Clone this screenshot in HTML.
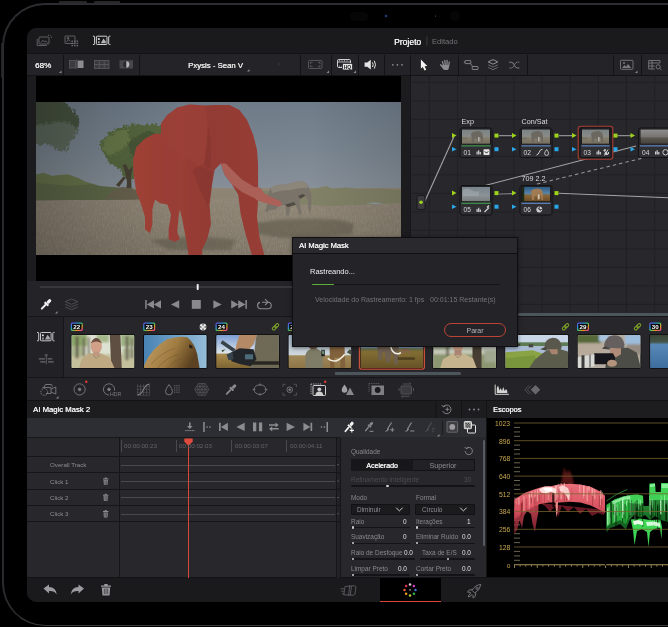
<!DOCTYPE html>
<html><head><meta charset="utf-8">
<style>
*{margin:0;padding:0;box-sizing:border-box}
html,body{width:668px;height:627px;background:#000;overflow:hidden}
body{font-family:"Liberation Sans",sans-serif;color:#ddd;position:relative}
.a{position:absolute}
#frame{left:2.4px;top:2.5px;width:720px;height:623px;border-style:solid;border-color:#2d2d31 #2a2a2e #38383a #2a2a2e;border-width:2.6px 2.8px 1.6px 2.8px;border-radius:43px;background:#000}
#screen{left:27px;top:28px;width:700px;height:573.5px;border-radius:10px;background:#242428;overflow:hidden}
#s{position:absolute;left:-27px;top:-28px;width:668px;height:627px;will-change:transform}
#s>div,#s>svg{position:absolute}
.t{position:absolute;white-space:nowrap;line-height:12px;height:12px;font-size:9px;will-change:transform}
.b{font-weight:bold;color:#f2f2f2}
.vs{position:absolute;width:1px;background:#151517}
svg text{font-family:"Liberation Sans",sans-serif}
</style></head><body>
<div class="a" style="left:1px;top:43px;width:2px;height:34.5px;background:#232325;border-radius:1px 0 0 1px"></div><div class="a" style="left:59.400px;top:1px;width:27.600px;height:2px;background:#262628;border-radius:1px 1px 0 0"></div><div class="a" style="left:93.900px;top:1px;width:26.600px;height:2px;background:#262628;border-radius:1px 1px 0 0"></div>
<div id="frame" class="a"></div>
<div class="a" style="left:350px;top:12.400px;width:18px;height:8.300px;border-radius:4.200px;background:#060607"></div><div class="a" style="left:384.700px;top:14.700px;width:2px;height:2.400px;border-radius:1px;background:#2a4aa0;box-shadow:0 0 1.500px #1c306c"></div><div class="a" style="left:435px;top:15.400px;width:1.300px;height:1.300px;border-radius:1px;background:#333"></div><div class="a" style="left:449.700px;top:11px;width:10px;height:10px;border-radius:5px;background:#060607"></div>
<div id="screen" class="a"><div id="s">
<!--BG-->
<div style="left:27px;top:28px;width:641px;height:26px;background:#1a1a1c"></div>
<div style="left:27px;top:53.3px;width:641px;height:22.7px;background:#242428;border-top:1px solid #131315;border-bottom:1px solid #131315"></div>
<div style="left:27px;top:76px;width:383px;height:205px;background:#1c1c1e"></div>
<div style="left:36px;top:76px;width:365px;height:205px;background:#000"></div>
<div style="left:410px;top:76px;width:258px;height:241px;background:#27272c;border-left:1px solid #161618"></div>
<div style="left:27px;top:281px;width:383px;height:36px;background:#242428"></div>
<div style="left:27px;top:316px;width:641px;height:62px;background:#27272b;border-top:1px solid #161618;border-bottom:1px solid #161618"></div>
<div style="left:27px;top:317px;width:37px;height:60px;background:#222226;border-right:1px solid #161618"></div>
<div style="left:27px;top:378px;width:641px;height:22px;background:#242428"></div>
<div style="left:27px;top:400px;width:641px;height:18px;background:#1d1d20;border-top:1px solid #131315"></div>
<div style="left:27px;top:418px;width:459px;height:160px;background:#28282c"></div>
<div style="left:27px;top:418px;width:459px;height:19px;background:#2c2e33"></div>
<div style="left:487px;top:418px;width:181px;height:160px;background:#000"></div>
<div style="left:27px;top:577px;width:641px;height:25px;background:#1a1a1c;border-top:1px solid #131315"></div>
<div style="left:380px;top:578px;width:61px;height:24px;background:#000;border-bottom:1.5px solid #d9473a"></div>
<!--VIEWER-->
<svg style="left:36px;top:102px" width="365" height="152.500" viewBox="36 102 365 152.500">
<defs>
<linearGradient id="sky" x1="0" y1="0" x2="0" y2="1"><stop offset="0" stop-color="#6f7c89"/><stop offset="0.5" stop-color="#7a8691"/><stop offset="1" stop-color="#8a929b"/></linearGradient>
<linearGradient id="grs" x1="0" y1="0" x2="0" y2="1"><stop offset="0" stop-color="#918777"/><stop offset="0.45" stop-color="#8b8171"/><stop offset="1" stop-color="#7f7667"/></linearGradient>
<linearGradient id="elg" gradientUnits="userSpaceOnUse" x1="133" y1="0" x2="265" y2="0"><stop offset="0" stop-color="#ae463a"/><stop offset="0.3" stop-color="#9e4037"/><stop offset="0.6" stop-color="#943b34"/><stop offset="1" stop-color="#983d36"/></linearGradient>
<linearGradient id="vig" x1="0" y1="0" x2="1" y2="0"><stop offset="0" stop-color="#000" stop-opacity="0.25"/><stop offset="0.18" stop-color="#000" stop-opacity="0.13"/><stop offset="0.4" stop-color="#000" stop-opacity="0.02"/><stop offset="0.75" stop-color="#000" stop-opacity="0"/><stop offset="1" stop-color="#000" stop-opacity="0.12"/></linearGradient>
<filter id="b1" x="-20%" y="-20%" width="140%" height="140%"><feGaussianBlur stdDeviation="0.7"/></filter>
<filter id="b2" x="-20%" y="-20%" width="140%" height="140%"><feGaussianBlur stdDeviation="1.5"/></filter>
<filter id="b3" x="-20%" y="-20%" width="140%" height="140%"><feGaussianBlur stdDeviation="0.35"/></filter>
<filter id="gn" x="0" y="0" width="100%" height="100%"><feTurbulence type="fractalNoise" baseFrequency="0.9 0.25" numOctaves="2" seed="4"/><feColorMatrix type="matrix" values="0 0 0 0 0.42  0 0 0 0 0.4  0 0 0 0 0.34  0.9 0.9 0 0 -0.75"/></filter><filter id="lf" x="-20%" y="-20%" width="140%" height="140%"><feTurbulence type="fractalNoise" baseFrequency="0.35" numOctaves="2" seed="9" result="n"/><feDisplacementMap in="SourceGraphic" in2="n" scale="7" xChannelSelector="R" yChannelSelector="G"/><feGaussianBlur stdDeviation="0.5"/></filter></defs>
<rect x="36" y="102" width="365" height="92" fill="url(#sky)"/>
<rect x="36" y="188" width="365" height="67" fill="url(#grs)"/>
<rect x="36" y="198" width="365" height="57" filter="url(#gn)" opacity="0.5"/>
<!-- far tree line / bushes right side -->
<path d="M262 191 L300 189.500 L318 188 L326 186 L332 188.500 L346 187.500 L360 189 L380 188.500 L401 190 L401 203 L372 204.500 L330 206 L290 204 L262 202Z" fill="#828268" filter="url(#b1)"/>
<path d="M366 203.300 L375 202.500 L384 203.300 L375 204.300Z" fill="#8e9aa2" filter="url(#b3)"/>
<!-- bush band left -->
<path d="M36 174.500 L44 173 L52 176 L60 175 L68 174.500 L78 178 L86 182 L100 186 L112 187 L124 188 L136 190 L136 199.500 L100 200 L70 200 L36 200.500Z" fill="#5e6a48" filter="url(#b1)"/>
<path d="M36 174.500 L44 173 L52 176 L60 175 L68 174.500 L78 178 L86 182 L92 184 L70 186 L50 184 L36 183Z" fill="#6e7c50" opacity="0.700" filter="url(#b1)"/>
<path d="M104 199.500 L112 191 L122 187 L132 188 L138 194 L140 199.500Z" fill="#6a6450" filter="url(#b1)"/>
<!-- left tree -->
<g filter="url(#lf)"><path d="M32 100 L58 100 L68 105 L75 112 L80 121 L78 128 L72 126 L66 122 L36 126Z" fill="#47533f"/>
<path d="M34 124 L66 120 L78 128 L76 136 L70 142 L68 150 L60 152 L54 147 L46 144 L40 146 L34 144Z" fill="#56624e" opacity="0.750"/></g>
<!-- middle tree -->
<g filter="url(#lf)"><path d="M99.500 147 L102 140 L108 134 L116 129 L126 125.500 L136 123.700 L146 125 L156 124 L164 128 L164 170 L150 172 L142 168 L136 176 L130 182 L124 176 L118 168 L108 162 L104 154Z" fill="#56683f"/>
<path d="M101 148 L106 138 L118 131 L128 129 L130 140 L122 150 L110 156Z" fill="#74864f" opacity="0.600"/>
<path d="M128 142 L146 131 L162 134 L162 168 L144 166 L132 158Z" fill="#3f4e33" opacity="0.600"/></g>
<path d="M122.500 165 L125 172 L127 182 L126.500 188 L131.500 188 L131 176 L133 166 L129 170 L126 164Z M116 185 L124 176 L125.500 178 L119 187Z" fill="#4a4234" filter="url(#b1)"/>
<!-- dark grass patch + shadows -->
<path d="M256 223 L280 219.500 L310 218.500 L340 220 L354 224 L352 234 L320 238 L280 238 L258 234Z" fill="#5e5a4c" opacity="0.600" filter="url(#b2)"/>
<path d="M150 240 L200 236 L236 240 L230 250 L170 250Z" fill="#5e5a4c" opacity="0.600" filter="url(#b2)"/>
<!-- far elephant -->
<g filter="url(#b3)"><path d="M268.200 194 L270.600 188 L276.600 185 L286.100 184.400 L294.500 182 L301.700 181.100 L306.500 183.200 L309.500 189.200 L311.300 194 L311.500 203.500 L310.700 210.700 L309.500 213.700 L308.300 208.300 L307.700 200 L305.300 195.700 L300.500 198.700 L299.300 201 L301 209.500 L301.700 214.300 L299.300 215 L296.900 207 L294.500 202.300 L291 203.500 L289.700 210.700 L289.100 215.500 L286.400 215.500 L285.500 209.500 L285 204.700 L279 206 L275.400 209.500 L273 209.500 L268.200 210.700 L266.400 213 L265.200 210.700 L267 204.700Z" fill="#79736a"/>
<path d="M270.600 188 L276.600 185 L286.100 184.400 L294.500 182 L301.700 181.100 L306.500 183.200 L308 188 L300 188 L290 190 L280 191 L272 193Z" fill="#918a7e" opacity="0.800"/>
<path d="M300.500 198.700 L305.300 195.700 L303 194 L298 196Z M285 204.700 L294 202 L296 205 L288 207Z" fill="#3c3832" opacity="0.700"/></g>
<!-- main elephant mask -->
<g filter="url(#b3)">
<path d="M161 123.600 L167.300 115 L177.300 107.500 L189.700 104.500 L204.600 105.500 L214.600 105 L229.500 105 L239.500 110 L247 120 L253.200 134.800 L257 149.800 L258.100 164.700 L258.100 184.600 L258.100 199.500 L257 217 L259.400 236.800 L264.400 255 L251.900 255 L245.700 234.400 L240.700 214.400 L238.200 194.500 L232 184.600 L224.500 174.600 L220.800 163.400 L214.600 169.700 L212.100 184.600 L209.600 204.500 L210.900 224.400 L207.100 239.300 L202.200 249.300 L202.200 255 L188.500 255 L186 239.300 L182.300 219.400 L179.800 209.500 L178.500 217 L177.300 232 L179.800 239.300 L174.800 241.800 L168.600 239.300 L168.600 229.400 L171 214.500 L167.300 204.500 L160 203.300 L155 199.500 L152.400 209.500 L152.400 224.400 L150 233 L145 229.400 L145 217 L141.200 204.500 L136.200 192 L133.700 174.600 L133 159.700 L136.200 147.300 L145 138.600 L155 133.600 L161 134Z" fill="url(#elg)"/>
<path d="M161 123.600 L167.300 115 L177.300 107.500 L189.700 104.500 L204.600 105.500 L208 120 L207 142 L204.600 162 L199.700 166 L184.700 157.200 L169.800 147.300 L162.300 135Z" fill="#a0443a" opacity="0.500"/>
<path d="M204.600 162 L207 142 L208 124 L210.500 142 L211 160 L210 168 L205 167Z" fill="#6c2824" opacity="0.220"/>
<path d="M199.700 166 L205 168 L212 172 L211 190 L208 206 L200 190 L192 170Z" fill="#6c2824" opacity="0.220"/>
<path d="M220.800 163.400 L224.500 174.600 L232 184.600 L242 192 L254.400 198.300 L256.500 200 L262 202 L269.300 204 L277.700 206.500 L280 206.500 L281.800 204 L281 201.500 L276.800 199.500 L270 196.500 L264.400 193.500 L260 187.500 L254.400 187.100 L242 179.600 L232 169.700 L225.800 163.400Z" fill="#ac6058"/>
</g>
<rect x="36" y="102" width="365" height="153" fill="url(#vig)"/>
</svg>
<!--/VIEWER-->
<!--NODES-->
<svg style="left:411px;top:76px" width="257" height="237" viewBox="411 76 257 237">
<defs>
<linearGradient id="nt1" x1="0" y1="0" x2="0" y2="1"><stop offset="0" stop-color="#7b8184"/><stop offset="0.5" stop-color="#898b88"/><stop offset="0.56" stop-color="#86806f"/><stop offset="1" stop-color="#776f60"/></linearGradient>
<linearGradient id="nt4" x1="0" y1="0" x2="0" y2="1"><stop offset="0" stop-color="#8e8e8c"/><stop offset="0.5" stop-color="#777572"/><stop offset="0.62" stop-color="#5a5650"/><stop offset="1" stop-color="#45423c"/></linearGradient>
<linearGradient id="nt5" x1="0" y1="0" x2="0" y2="1"><stop offset="0" stop-color="#78838b"/><stop offset="0.6" stop-color="#8a9296"/><stop offset="1" stop-color="#7a7e7c"/></linearGradient>
<linearGradient id="nt6" x1="0" y1="0" x2="0" y2="1"><stop offset="0" stop-color="#2c5a84"/><stop offset="0.48" stop-color="#5c86a8"/><stop offset="0.56" stop-color="#8a6838"/><stop offset="1" stop-color="#6a4c28"/></linearGradient>
<filter id="nb"><feGaussianBlur stdDeviation="0.4"/></filter>
</defs>
<rect x="428.9" y="76" width="1" height="237" fill="#212125"/>
<rect x="457.0" y="76" width="1" height="237" fill="#212125"/>
<rect x="485.2" y="76" width="1" height="237" fill="#212125"/>
<rect x="513.3" y="76" width="1" height="237" fill="#212125"/>
<rect x="541.5" y="76" width="1" height="237" fill="#212125"/>
<rect x="569.6" y="76" width="1" height="237" fill="#212125"/>
<rect x="597.8" y="76" width="1" height="237" fill="#212125"/>
<rect x="625.9" y="76" width="1" height="237" fill="#212125"/>
<rect x="654.1" y="76" width="1" height="237" fill="#212125"/>
<rect x="411" y="81.8" width="257" height="1" fill="#212125"/>
<rect x="411" y="100.3" width="257" height="1" fill="#212125"/>
<rect x="411" y="118.8" width="257" height="1" fill="#212125"/>
<rect x="411" y="137.3" width="257" height="1" fill="#212125"/>
<rect x="411" y="155.8" width="257" height="1" fill="#212125"/>
<rect x="411" y="174.3" width="257" height="1" fill="#212125"/>
<rect x="411" y="192.8" width="257" height="1" fill="#212125"/>
<rect x="411" y="211.3" width="257" height="1" fill="#212125"/>
<rect x="411" y="229.8" width="257" height="1" fill="#212125"/>
<rect x="411" y="248.3" width="257" height="1" fill="#212125"/>
<rect x="411" y="266.8" width="257" height="1" fill="#212125"/>
<rect x="411" y="285.3" width="257" height="1" fill="#212125"/>
<rect x="411" y="303.8" width="257" height="1" fill="#212125"/>
<path d="M424.5 202 L454 136.5" stroke="#a4a4a4" stroke-width="1.1" fill="none"/>
<path d="M499 135.6 H513 M559 135.6 H572 M617.5 135.6 H631" stroke="#8c8c8c" stroke-width="1.1" fill="none"/>
<path d="M485 185.5 L636 146" stroke="#a4a4a4" stroke-width="1.1" fill="none"/>
<path d="M537 184 L643 158" stroke="#949494" stroke-width="1.1" stroke-dasharray="3.5 3" fill="none"/>
<path d="M499 194 L513 193.6" stroke="#8c8c8c" stroke-width="1.1" fill="none"/>
<path d="M559 193.3 L668 197.7" stroke="#a4a4a4" stroke-width="1.1" fill="none"/>
<rect x="417" y="195.5" width="8" height="14" rx="2" fill="#3a3a3e" stroke="#19191b" stroke-width="1"/><circle cx="421" cy="202.3" r="1.8" fill="#9ed41a"/>
<rect x="460" y="128" width="32" height="29.5" rx="2" fill="#2f2f34" stroke="#131315" stroke-width="1"/><rect x="461.2" y="129" width="29.6" height="15.400" fill="#161618"/><rect x="462" y="129.5" width="28" height="14.200" fill="url(#nt1)"/><rect x="461.5" y="145.2" width="29" height="1.3" fill="#3c8c48"/><text x="463.6" y="154.8" font-size="6.6" fill="#dcdcdc">01</text><path d="M452 133.1 L456.5 135.6 L452 138.1Z" fill="#9ed41a"/><path d="M452 146.89999999999998 L456.5 149.2 L452 151.5Z" fill="#2aa7e8"/><rect x="494.5" y="133.6" width="4" height="4" fill="#9ed41a"/><rect x="494.5" y="147.2" width="4" height="4" fill="#2aa7e8"/><text x="461.5" y="123.8" font-size="7.2" fill="#dcdcdc">Exp</text>
<rect x="520" y="128" width="32" height="29.5" rx="2" fill="#2f2f34" stroke="#131315" stroke-width="1"/><rect x="521.2" y="129" width="29.6" height="15.400" fill="#161618"/><rect x="522" y="129.5" width="28" height="14.200" fill="url(#nt1)"/><rect x="521.5" y="145.2" width="29" height="1.3" fill="#5a7eb4"/><text x="523.6" y="154.8" font-size="6.6" fill="#dcdcdc">02</text><path d="M512 133.1 L516.5 135.6 L512 138.1Z" fill="#9ed41a"/><path d="M512 146.89999999999998 L516.5 149.2 L512 151.5Z" fill="#2aa7e8"/><rect x="554.5" y="133.6" width="4" height="4" fill="#9ed41a"/><rect x="554.5" y="147.2" width="4" height="4" fill="#2aa7e8"/><text x="521.5" y="123.8" font-size="7.2" fill="#dcdcdc">Con/Sat</text>
<rect x="578.2" y="126.2" width="34.6" height="33" rx="2.5" fill="#232327" stroke="#ab3e30" stroke-width="1.1"/><rect x="580" y="128" width="31" height="29.5" rx="2" fill="#2f2f34" stroke="#131315" stroke-width="1"/><rect x="581.2" y="129" width="28.6" height="15.400" fill="#161618"/><rect x="582" y="129.5" width="27" height="14.200" fill="url(#nt1)"/><rect x="581.5" y="145.2" width="28" height="1.3" fill="#5a7eb4"/><text x="583.6" y="154.8" font-size="6.6" fill="#dcdcdc">03</text><path d="M572 133.1 L576.5 135.6 L572 138.1Z" fill="#9ed41a"/><path d="M572 146.89999999999998 L576.5 149.2 L572 151.5Z" fill="#2aa7e8"/><rect x="613.5" y="133.6" width="4" height="4" fill="#9ed41a"/><rect x="613.5" y="147.2" width="4" height="4" fill="#2aa7e8"/>
<rect x="638.5" y="128" width="40" height="29.5" rx="2" fill="#2f2f34" stroke="#131315" stroke-width="1"/><rect x="639.7" y="129" width="37.6" height="15.400" fill="#161618"/><rect x="640.5" y="129.5" width="36" height="14.200" fill="url(#nt4)"/><rect x="640.0" y="145.2" width="37" height="1.3" fill="#5a7eb4"/><text x="642.1" y="154.8" font-size="6.6" fill="#dcdcdc">04</text><path d="M630.5 133.1 L635.0 135.6 L630.5 138.1Z" fill="#9ed41a"/><path d="M630.5 146.89999999999998 L635.0 149.2 L630.5 151.5Z" fill="#2aa7e8"/><rect x="681.0" y="133.6" width="4" height="4" fill="#9ed41a"/><rect x="681.0" y="147.2" width="4" height="4" fill="#2aa7e8"/>
<rect x="460" y="185.5" width="32" height="29.5" rx="2" fill="#2f2f34" stroke="#131315" stroke-width="1"/><rect x="461.2" y="186.5" width="29.6" height="15.400" fill="#161618"/><rect x="462" y="187.0" width="28" height="14.200" fill="url(#nt5)"/><rect x="461.5" y="202.7" width="29" height="1.3" fill="#3c8c48"/><text x="463.6" y="212.3" font-size="6.6" fill="#dcdcdc">05</text><path d="M452 190.6 L456.5 193.1 L452 195.6Z" fill="#9ed41a"/><path d="M452 204.39999999999998 L456.5 206.7 L452 209.0Z" fill="#2aa7e8"/><rect x="494.5" y="191.1" width="4" height="4" fill="#9ed41a"/><rect x="494.5" y="204.7" width="4" height="4" fill="#2aa7e8"/>
<rect x="520" y="185.5" width="32" height="29.5" rx="2" fill="#2f2f34" stroke="#131315" stroke-width="1"/><rect x="521.2" y="186.5" width="29.6" height="15.400" fill="#161618"/><rect x="522" y="187.0" width="28" height="14.200" fill="url(#nt6)"/><rect x="521.5" y="202.7" width="29" height="1.3" fill="#5a7eb4"/><text x="523.6" y="212.3" font-size="6.6" fill="#dcdcdc">06</text><path d="M512 190.6 L516.5 193.1 L512 195.6Z" fill="#9ed41a"/><path d="M512 204.39999999999998 L516.5 206.7 L512 209.0Z" fill="#2aa7e8"/><rect x="554.5" y="191.1" width="4" height="4" fill="#9ed41a"/><rect x="554.5" y="204.7" width="4" height="4" fill="#2aa7e8"/><text x="521.5" y="181.3" font-size="7.2" fill="#dcdcdc">709 2.2</text>
<g filter="url(#nb)"><path d="M471 133.5 l3 -2 l5 -0.5 l3 1.5 l1 4 l0 6 l-1.500 0 l-0.5 -4 l-1 -1 l-0.500 5 l-2 0 l-0.500 -4 l-2.500 0 l-0.500 4 l-2 0 l-0.500 -5z" fill="#6c675f"/><rect x="478.3" y="137" width="1.100" height="4.500" fill="#e4e4e0" opacity="0.85"/><rect x="462" y="137.5" width="5" height="2" fill="#6a705c" opacity="0.7"/></g>
<g filter="url(#nb)"><path d="M531 133.5 l3 -2 l5 -0.5 l3 1.5 l1 4 l0 6 l-1.500 0 l-0.5 -4 l-1 -1 l-0.500 5 l-2 0 l-0.500 -4 l-2.500 0 l-0.500 4 l-2 0 l-0.500 -5z" fill="#6c675f"/><rect x="538.3" y="137" width="1.100" height="4.500" fill="#e4e4e0" opacity="0.85"/><rect x="522" y="137.5" width="5" height="2" fill="#6a705c" opacity="0.7"/></g>
<g filter="url(#nb)"><path d="M591 133.5 l3 -2 l5 -0.5 l3 1.5 l1 4 l0 6 l-1.500 0 l-0.5 -4 l-1 -1 l-0.500 5 l-2 0 l-0.500 -4 l-2.500 0 l-0.500 4 l-2 0 l-0.500 -5z" fill="#6c675f"/><rect x="598.3" y="137" width="1.100" height="4.500" fill="#e4e4e0" opacity="0.85"/><rect x="582" y="137.5" width="5" height="2" fill="#6a705c" opacity="0.7"/></g>
<g filter="url(#nb)"><path d="M531 191 l3 -2 l5 -0.5 l3 1.5 l1 4 l0 6 l-1.500 0 l-0.5 -4 l-1 -1 l-0.500 5 l-2 0 l-0.500 -4 l-2.500 0 l-0.500 4 l-2 0 l-0.500 -5z" fill="#a07a52"/><rect x="538.300" y="194.500" width="1.100" height="4.500" fill="#f4f4f0" opacity="0.9"/><rect x="522" y="187" width="2.200" height="14.200" fill="#1c2a18"/><rect x="543" y="194" width="4" height="2" fill="#7a6a48"/></g>
<g filter="url(#nb)" opacity="0.5"><path d="M463 190 q4 -3 8 0 t8 1 v5 h-16z" fill="#a8b0b4"/></g>
<path d="M476.5 154.5 v-3 h1.2 v3z M478.1 154.5 v-4.2 h1.2 v4.2z M479.7 154.5 v-2.4 h1.2 v2.4z" fill="#d0d0d0"/><rect x="483.500" y="149.300" width="6" height="5.800" rx="0.800" fill="#e8e8e8"/><path d="M484.800 151.300 l1.700 1.900 l1.700 -1.900" stroke="#222" stroke-width="1" fill="none"/>
<path d="M536.500 155 q2 -0.5 2.800 -3 t3.200 -2.800" stroke="#d0d0d0" stroke-width="1" fill="none"/><path d="M546.600 149.500 q-2 2.600 -2 3.900 a2 2 0 0 0 4 0 q0 -1.300 -2 -3.900z" stroke="#d0d0d0" stroke-width="0.9" fill="none"/>
<path d="M596.5 154.5 v-3 h1.2 v3z M598.1 154.5 v-4.2 h1.2 v4.2z M599.7 154.5 v-2.4 h1.2 v2.4z" fill="#d0d0d0"/><path d="M603.500 150 l4.500 5 M608 149.500 l-3.500 6 M605 149 v2 M604 150 h2 M608.500 152 v2" stroke="#d0d0d0" stroke-width="1" fill="none"/><circle cx="606" cy="153.500" r="1.500" fill="#d0d0d0"/>
<path d="M655 154.5 v-3 h1.2 v3z M656.6 154.5 v-4.2 h1.2 v4.2z M658.2 154.5 v-2.4 h1.2 v2.4z" fill="#d0d0d0"/><circle cx="665.500" cy="152.300" r="2.700" stroke="#d0d0d0" stroke-width="1" fill="none"/>
<path d="M476.5 212 v-3 h1.2 v3z M478.1 212 v-4.2 h1.2 v4.2z M479.7 212 v-2.4 h1.2 v2.4z" fill="#d0d0d0"/><path d="M484.500 212 l3.500 -3.500 M487 206.500 l2 2 M487.500 207 l1.500 -1.500" stroke="#d0d0d0" stroke-width="1.200" fill="none"/>
<circle cx="539.300" cy="209.500" r="2.900" fill="#d0d0d0"/><path d="M537.200 207.400 l4.200 4.200 M539.300 206.600 v2.900 M542.200 209.500 h-2.900" stroke="#2f2f34" stroke-width="0.800" fill="none"/>
</svg>
<div style="left:518px;top:313px;width:150px;height:3px;background:#4d555c;border-radius:1.5px 0 0 1.5px"></div>
<!--/NODES-->
<!--CLIPS-->
<svg style="left:27px;top:316px" width="641" height="62" viewBox="27 316 641 62">
<defs>
<linearGradient id="rb" x1="0" y1="0" x2="1" y2="1"><stop offset="0" stop-color="#7a3fe0"/><stop offset="0.3" stop-color="#2b8fe0"/><stop offset="0.5" stop-color="#38c070"/><stop offset="0.7" stop-color="#e89a20"/><stop offset="1" stop-color="#e02fa0"/></linearGradient>
<linearGradient id="c2s" x1="0" y1="0" x2="1" y2="0"><stop offset="0" stop-color="#4682b4"/><stop offset="1" stop-color="#96bed8"/></linearGradient>
<linearGradient id="c2e" x1="0" y1="0" x2="1" y2="0.3"><stop offset="0" stop-color="#c6a268"/><stop offset="0.6" stop-color="#a07c42"/><stop offset="1" stop-color="#5c4220"/></linearGradient>
<linearGradient id="c3s" x1="0" y1="0" x2="0" y2="1"><stop offset="0" stop-color="#789cd4"/><stop offset="0.54" stop-color="#dce4ea"/><stop offset="0.58" stop-color="#a88a4c"/><stop offset="1" stop-color="#7c6232"/></linearGradient>
<linearGradient id="c4s" x1="0" y1="0" x2="0" y2="1"><stop offset="0" stop-color="#a8bcd0"/><stop offset="0.6" stop-color="#d0d8dc"/><stop offset="0.62" stop-color="#a08858"/><stop offset="1" stop-color="#8c7448"/></linearGradient>
<linearGradient id="c5s" x1="0" y1="0" x2="0" y2="1"><stop offset="0" stop-color="#6888b4"/><stop offset="0.38" stop-color="#84a0c4"/><stop offset="0.42" stop-color="#6a7450"/><stop offset="0.5" stop-color="#846e34"/><stop offset="1" stop-color="#645226"/></linearGradient>
<linearGradient id="c9s" x1="0" y1="0" x2="0" y2="1"><stop offset="0" stop-color="#364234"/><stop offset="0.22" stop-color="#465448"/><stop offset="0.3" stop-color="#5888b8"/><stop offset="1" stop-color="#3c6c9c"/></linearGradient>
<filter id="cb"><feGaussianBlur stdDeviation="0.6"/></filter>
<filter id="cb2"><feGaussianBlur stdDeviation="1.3"/></filter>
</defs>
<clipPath id="cp0"><rect x="71.6" y="335.1" width="62.6" height="32.9" rx="0.8"/></clipPath>
<clipPath id="cp1"><rect x="144.0" y="335.1" width="62.6" height="32.9" rx="0.8"/></clipPath>
<clipPath id="cp2"><rect x="216.3" y="335.1" width="62.6" height="32.9" rx="0.8"/></clipPath>
<clipPath id="cp3"><rect x="288.6" y="335.1" width="62.6" height="32.9" rx="0.8"/></clipPath>
<clipPath id="cp4"><rect x="360.6" y="335.1" width="62.6" height="32.9" rx="0.8"/></clipPath>
<clipPath id="cp5"><rect x="433.3" y="335.1" width="62.6" height="32.9" rx="0.8"/></clipPath>
<clipPath id="cp6"><rect x="505.5" y="335.1" width="62.6" height="32.9" rx="0.8"/></clipPath>
<clipPath id="cp7"><rect x="577.8" y="335.1" width="62.6" height="32.9" rx="0.8"/></clipPath>
<clipPath id="cp8"><rect x="650.0999999999999" y="335.1" width="62.6" height="32.9" rx="0.8"/></clipPath>
<rect x="70.8" y="334.3" width="64.2" height="34.5" rx="1.8" fill="#0c0c0d"/><g clip-path="url(#cp0)"><rect x="70.8" y="334.3" width="64.2" height="34.5" fill="#dde1d2" /><g filter="url(#cb2)"><rect x="70.8" y="334.3" width="16.0" height="12.0" fill="#8aa468" /><rect x="96.8" y="334.3" width="12.0" height="8.0" fill="#a4b888" /><rect x="120.8" y="334.3" width="16.0" height="12.0" fill="#9cb082" /><rect x="70.8" y="354.3" width="64.2" height="16.0" fill="#c4c09c" /><rect x="70.8" y="346.3" width="14.0" height="10.0" fill="#a8b48c" /><rect x="122.8" y="348.3" width="12.0" height="10.0" fill="#b0b896" /><rect x="75.8" y="336.3" width="2.5" height="22.0" fill="#5a5244" /><rect x="82.8" y="338.3" width="2.0" height="18.0" fill="#6e6658" /><rect x="87.8" y="337.3" width="1.8" height="18.0" fill="#7a7264" /><rect x="125.8" y="336.3" width="2.5" height="24.0" fill="#665e50" /><rect x="130.8" y="338.3" width="2.0" height="20.0" fill="#7a7264" /></g><g filter="url(#cb)"><path d="M109.8 334.3 h10.5 l1.5 34.5 h-10.5 z" fill="#5e5042"/><path d="M78.8 368.8 l3 -10 l8 -5.500 h11 l9 4.500 l5 11z" fill="#bea982"/><ellipse cx="96.3" cy="346.1" rx="5.600" ry="7.800" fill="#d0a088"/><path d="M90.6 343.3 q5.700 -10.500 11.400 0 q-5.700 -3.500 -11.400 0z" fill="#6c5040"/><rect x="93.3" y="351.8" width="6" height="4" fill="#c09680"/><path d="M92.8 355.3 l3.500 3 l3.500 -3" stroke="#8e8266" stroke-width="0.800" fill="none"/></g></g>
<rect x="143.2" y="334.3" width="64.2" height="34.5" rx="1.8" fill="#0c0c0d"/><g clip-path="url(#cp1)"><rect x="143.2" y="334.3" width="64.2" height="34.5" fill="url(#c2s)" /><g filter="url(#cb)"><path d="M143.2 368.8 L144.7 364.3 Q151.2 348.3 167.2 339.3 Q179.2 335.3 187.2 337.3 Q194.2 342.3 197.2 354.3 L199.7 368.8z" fill="url(#c2e)"/><path d="M189.2 344.3 l3 1.500 l0.500 3 l-3.500 -1z" fill="#2c2012"/><path d="M151.2 364.3 q10 -12 24 -16 M157.2 368.3 q10 -12 22 -14 M167.2 368.3 q6 -8 14 -10" stroke="#6c5228" stroke-width="0.700" fill="none" opacity="0.600"/></g></g>
<rect x="215.5" y="334.3" width="64.2" height="34.5" rx="1.8" fill="#0c0c0d"/><g clip-path="url(#cp2)"><rect x="215.5" y="334.3" width="64.2" height="34.5" fill="url(#c3s)" /><g filter="url(#cb)"><path d="M256.5 334.3 h23.200000000000003 v34.5 h-31 l5 -12z" fill="#6e6a56"/><path d="M239.5 334.3 h18 l-4 10 l-10 12 l-9 -3 l2 -9z" fill="#b48a66"/><path d="M229.5 353.3 l10 -5 l14 1 l3 10 l-6 7 l-10 -2 l-9 -3z" fill="#24262a"/><path d="M222.5 340.3 l13 9 l-2 3 l-13 -9z M226.5 354.3 l6 -2 l1 7 l-5 1z" fill="#38424c"/><rect x="245.0" y="354.3" width="8" height="5" fill="#4c6c78"/><path d="M252.5 361.3 h27.200000000000003 v3.500 h-29z" fill="#2a2822"/><path d="M225.5 349.3 l-4 1 l1 2z" fill="#3c5030"/></g></g>
<rect x="287.8" y="334.3" width="64.2" height="34.5" rx="1.8" fill="#0c0c0d"/><g clip-path="url(#cp3)"><rect x="287.8" y="334.3" width="64.2" height="34.5" fill="url(#c4s)" /><g filter="url(#cb)"><path d="M305.3 368.8 v-13 q1 -6 7 -7 h4 q6 1 6.500 8 v12z" fill="#7e7c66"/><rect x="308.8" y="340.3" width="9" height="9" rx="4" fill="#6c5646"/><path d="M329.3 340.3 h15 l1 28.5 h-5 v-11 h-6 v11 h-4z" fill="#82623e"/><path d="M327.8 358.3 q8 7 17 -4" stroke="#f0ece0" stroke-width="1.700" fill="none"/><rect x="321.3" y="349.8" width="3.500" height="6.500" fill="#20221e"/><rect x="322.1" y="350.6" width="2" height="3.500" fill="#6c9078"/><path d="M346.8 352.3 l3 -3 l2 2 v4z" fill="#44503c"/></g></g>
<rect x="359.5" y="334.0" width="64.8" height="35.1" rx="2" fill="#000" stroke="#c9503c" stroke-width="1.4"/><g clip-path="url(#cp4)"><rect x="359.8" y="334.3" width="64.2" height="34.5" fill="url(#c5s)" /><g filter="url(#cb)"><path d="M377.3 340.3 l3 -5 l8 -1 l7 1 l3 6 l0.500 12 l-1 11 h-3.500 l-1 -9 l-2 -2 l-1.500 9 h-4 l-1 -10 h-2 l-1 8 h-3.500 l-1 -12z" fill="#6e5e50"/><path d="M390.8 346.3 q1 7 7 7.500 q3 0 3.500 -3" stroke="#f6f2e6" stroke-width="1.500" fill="none"/><path d="M399.8 351.3 l2 -2.500 l5 -0.500 l3 1.500 v5 h-1.500 v-2.500 h-4 v2.500 h-1.500z" fill="#866848"/><rect x="397.8" y="357.3" width="17" height="2.500" fill="#3c3018" opacity="0.700"/></g></g>
<rect x="432.5" y="334.3" width="64.2" height="34.5" rx="1.8" fill="#0c0c0d"/><g clip-path="url(#cp5)"><rect x="432.5" y="334.3" width="64.2" height="34.5" fill="#c8ccba" /><g filter="url(#cb2)"><rect x="432.5" y="334.3" width="18.0" height="14.0" fill="#8a9a78" /><rect x="482.5" y="334.3" width="16.0" height="16.0" fill="#c8ccc0" /><rect x="432.5" y="354.3" width="64.2" height="16.0" fill="#8c9670" /><rect x="484.5" y="350.3" width="14.0" height="12.0" fill="#a0a890" /><rect x="446.5" y="338.3" width="2.0" height="18.0" fill="#5e564a" /></g><g filter="url(#cb)"><rect x="472.5" y="334.3" width="9" height="34.5" fill="#463c32"/><path d="M440.0 368.8 l3 -9.500 l9 -5.500 h12 l9 4.500 l4 10.500z" fill="#c6b48e"/><ellipse cx="458.0" cy="344.3" rx="5.600" ry="8" fill="#d0a088"/><rect x="454.5" y="350.3" width="7" height="5" fill="#ad8674"/><path d="M454.5 354.8 l3.500 3 l3.500 -3" stroke="#94886c" stroke-width="0.800" fill="none"/></g></g>
<rect x="504.7" y="334.3" width="64.2" height="34.5" rx="1.8" fill="#0c0c0d"/><g clip-path="url(#cp6)"><rect x="504.7" y="334.3" width="64.2" height="34.5" fill="#c8d6e8" /><rect x="504.7" y="342.3" width="64.2" height="4.0" fill="#5e7c54" /><rect x="504.7" y="346.3" width="64.2" height="7.0" fill="#aabcd4" /><g filter="url(#cb)"><path d="M504.7 352.3 l28 -2 l12 4 v34.5 h-40z" fill="#8aa444"/><path d="M504.7 358.3 l30 -3 l6 14 h-36z" fill="#74903a" opacity="0.700"/><path d="M528.7 368.8 l6 -9 l10 -8 l6 -3 h8 l10 3 v17z" fill="#5c5c4e"/><path d="M544.7 346.3 q0 -7.500 8 -8.500 q8 0 9 9 l-1 3 h-14z" fill="#5a584e"/><path d="M545.7 346.8 l-5.500 2.500 l7 1.500z" fill="#46443c"/><path d="M548.7 349.3 h9 v5 h-6z" fill="#a8846e"/><rect x="517.2" y="343.8" width="3" height="2" fill="#3c3c38"/><rect x="528.7" y="344.3" width="4.500" height="3" fill="#44443e"/></g></g>
<rect x="577" y="334.3" width="64.2" height="34.5" rx="1.8" fill="#0c0c0d"/><g clip-path="url(#cp7)"><rect x="577.0" y="334.3" width="64.2" height="34.5" fill="#b4aca0" /><g filter="url(#cb2)"><rect x="577.0" y="334.3" width="24.0" height="9.0" fill="#566838" /><rect x="599.0" y="334.3" width="12.0" height="7.0" fill="#a8c4e0" /><rect x="625.0" y="334.3" width="18.0" height="10.0" fill="#9cbcdc" /><rect x="577.0" y="343.3" width="28.0" height="12.0" fill="#b8aa9a" /><rect x="627.0" y="344.3" width="16.0" height="10.0" fill="#948a80" /></g><g filter="url(#cb)"><path d="M605 368.8 l3 -14 l8 -7 h12 l9 5 l4 16z" fill="#4e4e46"/><path d="M604 345.3 q1 -9 10 -10 q9 0 10.500 9 l-0.500 4 h-16z" fill="#665e5e"/><path d="M605 345.8 l-3 3 l10 1z" fill="#4a4642"/><path d="M610 348.3 h11 v6 l-5 3 l-6 -3z" fill="#b08c78"/><path d="M594 353.3 h19 l2 4 v7 h-21z" fill="#18181a"/><path d="M577 357.3 l17.500 -3 v12 l-17.500 3z" fill="#d8d8d4"/><rect x="581.5" y="355.3" width="3" height="14" fill="#3c3c3c"/><rect x="589" y="354.3" width="2" height="13" fill="#8c8c8c"/><ellipse cx="612" cy="363.3" rx="5" ry="3.500" fill="#b4947c"/></g></g>
<rect x="649.3" y="334.3" width="64.2" height="34.5" rx="1.8" fill="#0c0c0d"/><g clip-path="url(#cp8)"><rect x="649.3" y="334.3" width="64.2" height="34.5" fill="url(#c9s)" /></g>
<rect x="70.8" y="322.4" width="12" height="8.6" rx="1.6" fill="url(#rb)"/><rect x="72.1" y="323.7" width="9.4" height="6" rx="0.6" fill="#0a0a0c"/><text x="76.8" y="329.3" font-size="6.2" font-weight="bold" fill="#fff" text-anchor="middle">22</text><rect x="143.2" y="322.4" width="12" height="8.6" rx="1.6" fill="url(#rb)"/><rect x="144.5" y="323.7" width="9.4" height="6" rx="0.6" fill="#0a0a0c"/><text x="149.2" y="329.3" font-size="6.2" font-weight="bold" fill="#fff" text-anchor="middle">23</text><rect x="215.5" y="322.4" width="12" height="8.6" rx="1.6" fill="url(#rb)"/><rect x="216.8" y="323.7" width="9.4" height="6" rx="0.6" fill="#0a0a0c"/><text x="221.5" y="329.3" font-size="6.2" font-weight="bold" fill="#fff" text-anchor="middle">24</text><rect x="287.8" y="322.4" width="12" height="8.6" rx="1.6" fill="url(#rb)"/><rect x="289.1" y="323.7" width="9.4" height="6" rx="0.6" fill="#0a0a0c"/><text x="293.8" y="329.3" font-size="6.2" font-weight="bold" fill="#fff" text-anchor="middle">25</text><rect x="577" y="322.4" width="12" height="8.6" rx="1.6" fill="url(#rb)"/><rect x="578.3" y="323.7" width="9.4" height="6" rx="0.6" fill="#0a0a0c"/><text x="583" y="329.3" font-size="6.2" font-weight="bold" fill="#fff" text-anchor="middle">29</text><rect x="649.3" y="322.4" width="12" height="8.6" rx="1.6" fill="url(#rb)"/><rect x="650.5999999999999" y="323.7" width="9.4" height="6" rx="0.6" fill="#0a0a0c"/><text x="655.3" y="329.3" font-size="6.2" font-weight="bold" fill="#fff" text-anchor="middle">30</text>
<circle cx="203" cy="327" r="3.4" fill="#e8e8e8"/><path d="M203 323.6 v6.8 M199.6 327 h6.8" stroke="#27272b" stroke-width="1"/><circle cx="203" cy="327" r="1.1" fill="#27272b"/><path d="M201 325 l4 4 M205 325 l-4 4" stroke="#e8e8e8" stroke-width="1.2"/>
<g transform="translate(275.5 326.8) rotate(-45)" fill="none" stroke="#80a628" stroke-width="1"><rect x="-3.9" y="-1.4" width="4.6" height="2.8" rx="1.4"/><rect x="-0.7" y="-1.4" width="4.6" height="2.8" rx="1.4"/></g><g transform="translate(565.5 326.8) rotate(-45)" fill="none" stroke="#80a628" stroke-width="1"><rect x="-3.9" y="-1.4" width="4.6" height="2.8" rx="1.4"/><rect x="-0.7" y="-1.4" width="4.6" height="2.8" rx="1.4"/></g><g transform="translate(637.5 326.8) rotate(-45)" fill="none" stroke="#80a628" stroke-width="1"><rect x="-3.9" y="-1.4" width="4.6" height="2.8" rx="1.4"/><rect x="-0.7" y="-1.4" width="4.6" height="2.8" rx="1.4"/></g>
<g fill="none" stroke="#c8c8c8" stroke-width="1"><rect x="40.500" y="332.500" width="10.600" height="8.300" rx="0.800"/><path d="M37 332.500 h1.100 q0.600 0 0.600 0.600 v7.100 q0 0.600 -0.600 0.600 h-1.100 M54.500 332.500 h-1.100 q-0.600 0 -0.600 0.600 v7.100 q0 0.600 0.600 0.600 h1.100"/></g><path d="M44.900 339.600 l2.700 -4.800 l2.300 3 v1.800z" fill="#aaaaaa"/><rect x="42" y="334.500" width="1.800" height="1.700" fill="#e0e0e0"/><rect x="42.100" y="337.500" width="1.700" height="2.100" fill="#989898"/>
<g fill="none" stroke="#6c6c70" stroke-width="1.300"><path d="M38.800 358.800 h6.100 M47.600 358.800 h4.600 M40.300 361.900 h5 M48 361.900 h5.700"/><path d="M46.300 355.500 v8.700" stroke-width="0.800"/><ellipse cx="46.200" cy="355.200" rx="1.300" ry="0.900" stroke-width="0.700"/></g>
</svg>
<div style="left:334.5px;top:371.6px;width:126px;height:3.6px;background:#4d555c;border-radius:0 1.8px 1.8px 0"></div>
<!--/CLIPS-->
<!--PANEL-->
<div style="left:27px;top:437px;width:313px;height:1px;background:#18181a"></div>
<div style="left:27px;top:438px;width:313px;height:18px;background:#28282c"></div>
<div style="left:27px;top:456px;width:313px;height:1.2px;background:#161618"></div>
<div style="left:27px;top:472.3px;width:313px;height:1.2px;background:#161618"></div>
<div style="left:27px;top:488.6px;width:313px;height:1.2px;background:#161618"></div>
<div style="left:27px;top:505px;width:313px;height:1.2px;background:#161618"></div>
<div style="left:27px;top:521.3px;width:313px;height:1.2px;background:#161618"></div>
<div style="left:119.300px;top:438px;width:1.200px;height:140px;background:#161618"></div>
<div style="left:121px;top:464.6px;width:214px;height:1px;background:#4a4a4e"></div>
<div style="left:121px;top:480.8px;width:214px;height:1px;background:#4a4a4e"></div>
<div style="left:121px;top:497.2px;width:214px;height:1px;background:#4a4a4e"></div>
<div style="left:121px;top:513.5px;width:214px;height:1px;background:#4a4a4e"></div>
<div style="left:121px;top:440px;width:1px;height:12px;background:#4a4a4e"></div>
<div style="left:176px;top:440px;width:1px;height:12px;background:#4a4a4e"></div>
<div style="left:231px;top:440px;width:1px;height:12px;background:#4a4a4e"></div>
<div style="left:286px;top:440px;width:1px;height:12px;background:#4a4a4e"></div>
<div style="left:335.5px;top:438px;width:5px;height:140px;background:#232327;border-left:1px solid #161618;border-right:1px solid #161618"></div>
<div style="left:486px;top:400px;width:1px;height:178px;background:#131315"></div>
<div style="left:482.6px;top:440px;width:2.6px;height:106px;background:#575c64;border-radius:1.3px"></div>
<div style="left:351px;top:459px;width:123.5px;height:11.6px;background:#222226;border:1px solid #121214"></div>
<div style="left:351px;top:459px;width:61.5px;height:11.6px;background:#17171a"></div>
<div style="left:351px;top:504px;width:59px;height:10.6px;background:#1b1b1e;border:1px solid #121214;border-radius:1px"></div>
<div style="left:415px;top:504px;width:59.5px;height:10.6px;background:#1b1b1e;border:1px solid #121214;border-radius:1px"></div>
<div style="left:351px;top:485.2px;width:123.5px;height:1.8px;background:#141416;border-radius:1px"></div>
<div style="left:386.3px;top:485.0px;width:2.4px;height:2.2px;background:#d0d0d0;border-radius:1px"></div>
<div style="left:351px;top:526.6px;width:58.5px;height:1.8px;background:#141416;border-radius:1px"></div>
<div style="left:351.6px;top:526.4px;width:2.4px;height:2.2px;background:#d0d0d0;border-radius:1px"></div>
<div style="left:415px;top:526.6px;width:59.5px;height:1.8px;background:#141416;border-radius:1px"></div>
<div style="left:416.1px;top:526.4px;width:2.4px;height:2.2px;background:#d0d0d0;border-radius:1px"></div>
<div style="left:351px;top:542.5px;width:58.5px;height:1.8px;background:#141416;border-radius:1px"></div>
<div style="left:351.6px;top:542.3px;width:2.4px;height:2.2px;background:#d0d0d0;border-radius:1px"></div>
<div style="left:415px;top:542.5px;width:59.5px;height:1.8px;background:#141416;border-radius:1px"></div>
<div style="left:416.1px;top:542.3px;width:2.4px;height:2.2px;background:#d0d0d0;border-radius:1px"></div>
<div style="left:351px;top:558px;width:64px;height:1.8px;background:#141416;border-radius:1px"></div>
<div style="left:351.6px;top:557.8px;width:2.4px;height:2.2px;background:#d0d0d0;border-radius:1px"></div>
<div style="left:420px;top:558px;width:54.5px;height:1.8px;background:#141416;border-radius:1px"></div>
<div style="left:446.8px;top:557.8px;width:2.4px;height:2.2px;background:#d0d0d0;border-radius:1px"></div>
<div style="left:351px;top:574px;width:58.5px;height:1.8px;background:#141416;border-radius:1px"></div>
<div style="left:351.6px;top:573.8px;width:2.4px;height:2.2px;background:#d0d0d0;border-radius:1px"></div>
<div style="left:415px;top:574px;width:59.5px;height:1.8px;background:#141416;border-radius:1px"></div>
<div style="left:416.1px;top:573.8px;width:2.4px;height:2.2px;background:#d0d0d0;border-radius:1px"></div>
<div style="left:187.7px;top:444px;width:1.5px;height:134px;background:#d9473a"></div>
<svg style="left:183px;top:438px" width="12" height="10" viewBox="183 438 12 10"><path d="M184.3 438.6 h8.4 v3 l-4.200 4.400 l-4.200 -4.400z" fill="#e04a3c"/></svg>
<!--/PANEL-->
<!--SCOPE-->
<svg style="left:487px;top:418px" width="181" height="160" viewBox="487 418 181 160">
<defs><filter id="sb1" x="-10%" y="-20%" width="120%" height="140%"><feGaussianBlur stdDeviation="0.6"/></filter><filter id="sb2" x="-10%" y="-20%" width="120%" height="140%"><feGaussianBlur stdDeviation="0.35"/></filter><filter id="sb3" x="-10%" y="-20%" width="120%" height="140%"><feGaussianBlur stdDeviation="1.1"/></filter>
<linearGradient id="rg" x1="0" y1="0" x2="0" y2="1"><stop offset="0" stop-color="#f27480"/><stop offset="0.6" stop-color="#e45a68"/><stop offset="1" stop-color="#b83c4a"/></linearGradient>
<linearGradient id="rg2" x1="0" y1="0" x2="0" y2="1"><stop offset="0" stop-color="#d85060"/><stop offset="1" stop-color="#7a1c2a"/></linearGradient>
<linearGradient id="gg" x1="0" y1="0" x2="0" y2="1"><stop offset="0" stop-color="#5cf070"/><stop offset="0.5" stop-color="#34cc4a"/><stop offset="1" stop-color="#1c8c30"/></linearGradient>
</defs>
<rect x="514" y="426.9" width="6" height="1" fill="#68644f"/>
<rect x="514" y="431.4" width="6" height="1" fill="#68644f"/>
<rect x="514" y="435.8" width="6" height="1" fill="#68644f"/>
<rect x="514" y="444.6" width="6" height="1" fill="#68644f"/>
<rect x="514" y="449.1" width="6" height="1" fill="#68644f"/>
<rect x="514" y="453.5" width="6" height="1" fill="#68644f"/>
<rect x="514" y="462.3" width="6" height="1" fill="#68644f"/>
<rect x="514" y="466.8" width="6" height="1" fill="#68644f"/>
<rect x="514" y="471.2" width="6" height="1" fill="#68644f"/>
<rect x="514" y="480.0" width="6" height="1" fill="#68644f"/>
<rect x="514" y="484.5" width="6" height="1" fill="#68644f"/>
<rect x="514" y="488.9" width="6" height="1" fill="#68644f"/>
<rect x="514" y="497.7" width="6" height="1" fill="#68644f"/>
<rect x="514" y="502.2" width="6" height="1" fill="#68644f"/>
<rect x="514" y="506.6" width="6" height="1" fill="#68644f"/>
<rect x="514" y="515.4" width="6" height="1" fill="#68644f"/>
<rect x="514" y="519.9" width="6" height="1" fill="#68644f"/>
<rect x="514" y="524.3" width="6" height="1" fill="#68644f"/>
<rect x="514" y="533.2" width="6" height="1" fill="#68644f"/>
<rect x="514" y="537.6" width="6" height="1" fill="#68644f"/>
<rect x="514" y="542.1" width="6" height="1" fill="#68644f"/>
<rect x="514" y="550.9" width="6" height="1" fill="#68644f"/>
<rect x="514" y="555.4" width="6" height="1" fill="#68644f"/>
<rect x="514" y="559.8" width="6" height="1" fill="#68644f"/>
<g filter="url(#sb3)"><path d="M561 484.500 L562.500 474 L564.500 467 L566.500 473 L569 470 L571.500 474 L574.400 484.500Z" fill="#5c1616" opacity="0.9"/></g>
<g filter="url(#sb1)">
<path d="M514.300 508 L538.400 503 L538.400 512 L536.500 522 L535 532 L532.500 524 L531 514 L527 511 L524 516 L522 528 L519.500 520 L517 530 L514.300 534Z" fill="url(#rg2)" opacity="0.9"/>
<path d="M540 503 L605 510 L604 515 L598 513 L592 516 L586 509 L580 514 L574 507 L568 512 L562 506 L558 517 L555 506 L550 512 L545 506Z" fill="#8c2030" opacity="0.75"/>
<path d="M514.3 499.4 L525.0 492.7 L535.4 489.0 L543.0 486.7 L552.0 486.0 L559.4 484.5 L570.0 483.7 L580.4 484.5 L590.8 486.7 L599.8 491.2 L605.0 495.7 L605.0 513.0 L599.8 510.0 L590.8 505.4 L580.4 502.4 L570.0 501.7 L559.4 502.4 L549.0 502.4 L540.0 504.0 L529.5 508.4 L522.0 513.0 L514.3 520.0Z" fill="url(#rg)" opacity="0.96"/>
</g>
<g filter="url(#sb2)"><rect x="544.2" y="491.7" width="0.6" height="12.8" fill="#701c1c" opacity="0.41"/><rect x="547.8" y="490.4" width="0.5" height="11.1" fill="#701c1c" opacity="0.38"/><rect x="522.1" y="500.1" width="1.1" height="10.1" fill="#701c1c" opacity="0.29"/><rect x="535.4" y="496.1" width="0.9" height="16.4" fill="#701c1c" opacity="0.37"/><rect x="600.9" y="494.5" width="0.7" height="15.3" fill="#701c1c" opacity="0.29"/><rect x="526.2" y="498.9" width="0.6" height="14.8" fill="#701c1c" opacity="0.42"/><rect x="571.6" y="488.3" width="0.5" height="11.6" fill="#701c1c" opacity="0.27"/><rect x="533.9" y="496.8" width="0.7" height="10.1" fill="#701c1c" opacity="0.43"/><rect x="555.4" y="489.3" width="1.0" height="14.5" fill="#701c1c" opacity="0.32"/><rect x="566.0" y="488.6" width="1.0" height="15.5" fill="#701c1c" opacity="0.34"/><rect x="601.3" y="494.8" width="1.0" height="10.0" fill="#701c1c" opacity="0.30"/><rect x="558.5" y="488.0" width="1.0" height="13.0" fill="#701c1c" opacity="0.42"/><rect x="592.2" y="492.3" width="0.9" height="13.3" fill="#701c1c" opacity="0.42"/><rect x="555.7" y="490.9" width="0.8" height="16.3" fill="#701c1c" opacity="0.45"/><rect x="521.3" y="502.4" width="1.2" height="12.8" fill="#701c1c" opacity="0.50"/><rect x="540.8" y="493.5" width="0.5" height="13.0" fill="#701c1c" opacity="0.39"/><rect x="530.6" y="496.4" width="1.0" height="5.7" fill="#701c1c" opacity="0.29"/><rect x="537.5" y="494.6" width="0.6" height="15.5" fill="#701c1c" opacity="0.38"/><rect x="563.8" y="489.9" width="1.1" height="14.8" fill="#701c1c" opacity="0.33"/><rect x="552.1" y="490.2" width="1.2" height="15.6" fill="#701c1c" opacity="0.30"/><rect x="531.3" y="496.5" width="0.8" height="7.8" fill="#701c1c" opacity="0.43"/><rect x="538.9" y="493.0" width="0.8" height="10.0" fill="#701c1c" opacity="0.42"/><rect x="598.9" y="495.6" width="0.9" height="11.2" fill="#701c1c" opacity="0.45"/><rect x="520.7" y="503.2" width="1.1" height="14.4" fill="#701c1c" opacity="0.49"/><rect x="550.1" y="490.8" width="0.9" height="6.2" fill="#701c1c" opacity="0.27"/><rect x="521.9" y="500.6" width="0.7" height="6.9" fill="#701c1c" opacity="0.27"/><rect x="516.0" y="498.7" width="0.8" height="5.2" fill="#ffc4bc" opacity="0.31"/><rect x="592.1" y="488.0" width="0.7" height="5.8" fill="#ffc4bc" opacity="0.44"/><rect x="547.7" y="486.0" width="1.2" height="14.2" fill="#ffc4bc" opacity="0.49"/><rect x="558.1" y="483.6" width="0.7" height="5.2" fill="#ffc4bc" opacity="0.41"/><rect x="588.1" y="486.0" width="1.2" height="4.3" fill="#ffc4bc" opacity="0.51"/><rect x="528.8" y="493.4" width="0.9" height="4.3" fill="#ffc4bc" opacity="0.69"/><rect x="591.1" y="487.9" width="0.8" height="7.1" fill="#ffc4bc" opacity="0.37"/><rect x="583.2" y="485.5" width="0.7" height="13.3" fill="#ffc4bc" opacity="0.39"/><rect x="586.6" y="487.2" width="1.1" height="14.2" fill="#ffc4bc" opacity="0.63"/><rect x="580.4" y="484.3" width="0.7" height="10.2" fill="#ffc4bc" opacity="0.31"/><rect x="518.4" y="497.7" width="1.0" height="7.1" fill="#ffc4bc" opacity="0.68"/><rect x="554.9" y="485.9" width="1.2" height="15.9" fill="#ffc4bc" opacity="0.45"/><rect x="535.2" y="490.2" width="0.6" height="6.4" fill="#ffc4bc" opacity="0.55"/><rect x="594.3" y="489.2" width="1.0" height="9.8" fill="#ffc4bc" opacity="0.62"/><rect x="523.4" y="496.1" width="1.0" height="14.9" fill="#ffc4bc" opacity="0.60"/><rect x="557.6" y="483.9" width="0.7" height="13.5" fill="#ffc4bc" opacity="0.62"/><rect x="600.5" y="490.5" width="1.2" height="8.8" fill="#ffc4bc" opacity="0.59"/><rect x="530.8" y="491.8" width="1.1" height="5.8" fill="#ffc4bc" opacity="0.62"/><rect x="528.7" y="494.0" width="1.0" height="15.8" fill="#ffc4bc" opacity="0.44"/><rect x="563.7" y="483.0" width="1.2" height="4.2" fill="#ffc4bc" opacity="0.56"/><rect x="561.8" y="484.8" width="1.1" height="9.2" fill="#ffc4bc" opacity="0.63"/><rect x="534.4" y="490.6" width="0.7" height="7.5" fill="#ffc4bc" opacity="0.53"/><rect x="538.6" y="489.4" width="1.1" height="5.6" fill="#ffc4bc" opacity="0.44"/><rect x="555.9" y="485.0" width="0.8" height="14.9" fill="#ffc4bc" opacity="0.67"/><rect x="559.6" y="484.3" width="0.5" height="10.3" fill="#ffc4bc" opacity="0.48"/><rect x="531.9" y="491.0" width="0.6" height="13.6" fill="#ffc4bc" opacity="0.49"/><rect x="579.1" y="484.8" width="0.9" height="7.9" fill="#ffc4bc" opacity="0.52"/><rect x="584.2" y="484.9" width="0.7" height="10.7" fill="#ffc4bc" opacity="0.41"/><rect x="583.2" y="485.5" width="1.0" height="10.7" fill="#ffc4bc" opacity="0.66"/><rect x="554.6" y="485.3" width="0.9" height="10.1" fill="#ffc4bc" opacity="0.58"/><rect x="555.4" y="485.0" width="1.2" height="9.7" fill="#ffc4bc" opacity="0.58"/><rect x="592.3" y="488.7" width="0.9" height="7.1" fill="#ffc4bc" opacity="0.68"/><rect x="589.1" y="486.2" width="0.8" height="5.5" fill="#ffc4bc" opacity="0.33"/><rect x="536.9" y="489.3" width="1.0" height="12.0" fill="#ffc4bc" opacity="0.66"/><rect x="529.4" y="493.5" width="0.6" height="11.9" fill="#ffc4bc" opacity="0.65"/><rect x="600.2" y="490.0" width="0.8" height="15.4" fill="#ffc4bc" opacity="0.49"/><rect x="602.1" y="491.9" width="0.8" height="5.9" fill="#ffc4bc" opacity="0.51"/><rect x="545.5" y="486.7" width="1.0" height="7.8" fill="#ffc4bc" opacity="0.31"/><rect x="564.2" y="483.6" width="0.7" height="4.2" fill="#ffc4bc" opacity="0.55"/><rect x="560.6" y="483.2" width="1.1" height="15.8" fill="#ffc4bc" opacity="0.69"/><rect x="552.300" y="493" width="2" height="14" fill="#000" opacity="0.7"/><path d="M539 489 L545 486.500 L552 487 L556 489 L556 493.500 L551 492 L546 493.500 L541 492.500Z" fill="#ffe8e4" opacity="0.92"/><path d="M543 488 L551 488 L553 491 L546 491.500Z" fill="#fff"/><path d="M559 487 L563 485.500 L568 488 L570 494 L569 501 L566.500 496 L563 492 L560 491Z" fill="#ffe0dc" opacity="0.85"/><path d="M555.500 502 L558 502 L557.500 512 L556.300 517.500Z" fill="#ff9c94" opacity="0.9"/></g>
<path d="M606.500 501 Q616 493.500 627.300 489.400" stroke="#2a8c3c" stroke-width="1" fill="none" opacity="0.85"/>
<g filter="url(#sb1)">
<path d="M606.5 505.0 L614.3 499.4 L623.0 496.6 L630.0 495.0 L637.3 494.4 L643.0 495.8 L643.5 506.0 L648.8 506.0 L649.5 483.7 L655.0 483.2 L655.5 492.0 L660.8 492.0 L661.2 483.0 L668.0 483.0 L668.0 522.0 L661.0 520.0 L655.0 516.0 L650.0 520.0 L645.0 515.0 L640.0 518.0 L635.0 514.0 L630.0 519.5 L625.8 529.6 L620.0 524.0 L614.3 526.7 L610.0 528.0 L606.5 532.4Z" fill="url(#gg)" opacity="0.62"/>
<path d="M606.500 505 L614.300 499.400 L623 496.600 L630 495 L630 512 L625.800 524 L620 520 L614.300 523 L610 524 L606.500 528Z" fill="#34d84c" opacity="0.620"/>
<path d="M630 495 L637.300 494.400 L643 495.800 L643.300 503 L637 504 L630 503Z M649.500 483.700 L655 483.200 L655.500 492 L660.800 492 L661.200 483 L668 483 L668 500 L649.300 500Z" fill="#48e860" opacity="0.750"/>
<path d="M630.800 519.500 L640 518.500 L650 520 L660.300 519.500 L662 527 L661.500 539 L660 528 L654 529 L650 532 L648.500 547 L647 532 L642 529 L637 531 L634.500 545 L633 530Z" fill="#40e058" opacity="0.95"/>
</g>
<g filter="url(#sb2)"><rect x="613.3" y="502.1" width="1.3" height="12.6" fill="#021c06" opacity="0.44"/><rect x="614.8" y="503.4" width="1.3" height="24.8" fill="#021c06" opacity="0.44"/><rect x="616.0" y="507.4" width="1.2" height="20.0" fill="#021c06" opacity="0.38"/><rect x="610.5" y="505.5" width="0.7" height="18.0" fill="#021c06" opacity="0.68"/><rect x="655.1" y="500.7" width="0.7" height="24.0" fill="#021c06" opacity="0.65"/><rect x="634.2" y="502.7" width="1.4" height="19.7" fill="#021c06" opacity="0.44"/><rect x="614.8" y="504.2" width="0.7" height="15.3" fill="#021c06" opacity="0.41"/><rect x="610.0" y="501.6" width="0.9" height="16.4" fill="#021c06" opacity="0.62"/><rect x="624.4" y="504.0" width="0.9" height="14.5" fill="#021c06" opacity="0.36"/><rect x="622.0" y="500.1" width="1.1" height="22.3" fill="#021c06" opacity="0.42"/><rect x="635.5" y="507.5" width="1.3" height="13.5" fill="#021c06" opacity="0.50"/><rect x="636.7" y="506.7" width="1.1" height="17.5" fill="#021c06" opacity="0.59"/><rect x="665.9" y="502.7" width="1.2" height="23.7" fill="#021c06" opacity="0.57"/><rect x="631.3" y="502.8" width="0.7" height="12.8" fill="#021c06" opacity="0.37"/><rect x="651.5" y="502.0" width="0.7" height="14.3" fill="#021c06" opacity="0.64"/><rect x="659.2" y="505.4" width="0.8" height="15.9" fill="#021c06" opacity="0.45"/><rect x="634.6" y="501.3" width="0.8" height="18.2" fill="#021c06" opacity="0.69"/><rect x="665.4" y="504.4" width="1.5" height="15.4" fill="#021c06" opacity="0.46"/><rect x="628.4" y="500.0" width="1.0" height="17.3" fill="#021c06" opacity="0.53"/><rect x="619.1" y="504.0" width="0.8" height="12.1" fill="#021c06" opacity="0.38"/><rect x="631.0" y="500.3" width="0.9" height="12.3" fill="#021c06" opacity="0.43"/><rect x="642.1" y="504.2" width="1.2" height="22.5" fill="#021c06" opacity="0.60"/><rect x="659.7" y="503.1" width="1.5" height="16.6" fill="#021c06" opacity="0.40"/><rect x="650.4" y="505.1" width="1.4" height="12.6" fill="#021c06" opacity="0.66"/><rect x="651.0" y="506.5" width="1.1" height="14.0" fill="#021c06" opacity="0.53"/><rect x="657.1" y="506.4" width="1.1" height="23.6" fill="#021c06" opacity="0.66"/><rect x="620.8" y="500.2" width="0.9" height="13.9" fill="#021c06" opacity="0.39"/><rect x="657.1" y="504.5" width="1.2" height="20.8" fill="#021c06" opacity="0.59"/><rect x="636.4" y="500.0" width="1.3" height="23.2" fill="#021c06" opacity="0.53"/><rect x="639.1" y="505.3" width="1.3" height="12.9" fill="#021c06" opacity="0.44"/><rect x="611.5" y="502.1" width="0.8" height="22.2" fill="#021c06" opacity="0.61"/><rect x="665.5" y="504.0" width="1.0" height="17.4" fill="#021c06" opacity="0.59"/><rect x="653.0" y="504.9" width="0.7" height="21.0" fill="#021c06" opacity="0.40"/><rect x="622.2" y="505.9" width="1.1" height="16.3" fill="#021c06" opacity="0.35"/><rect x="610.6" y="502.2" width="1.2" height="21.4" fill="#021c06" opacity="0.59"/><rect x="624.5" y="504.1" width="1.0" height="18.5" fill="#021c06" opacity="0.39"/><rect x="660.6" y="495.6" width="1.2" height="18.7" fill="#c4ffcc" opacity="0.31"/><rect x="634.5" y="500.6" width="0.8" height="18.6" fill="#c4ffcc" opacity="0.41"/><rect x="619.6" y="500.1" width="0.6" height="13.1" fill="#c4ffcc" opacity="0.51"/><rect x="664.2" y="495.1" width="0.9" height="16.5" fill="#c4ffcc" opacity="0.65"/><rect x="649.2" y="495.9" width="0.8" height="17.6" fill="#c4ffcc" opacity="0.31"/><rect x="607.2" y="507.0" width="0.6" height="9.2" fill="#c4ffcc" opacity="0.44"/><rect x="626.0" y="500.7" width="1.0" height="5.0" fill="#c4ffcc" opacity="0.64"/><rect x="614.2" y="504.3" width="0.7" height="17.6" fill="#c4ffcc" opacity="0.45"/><rect x="630.6" y="502.0" width="0.8" height="13.2" fill="#c4ffcc" opacity="0.47"/><rect x="623.5" y="497.8" width="0.7" height="16.7" fill="#c4ffcc" opacity="0.67"/><rect x="622.0" y="499.8" width="0.8" height="7.7" fill="#c4ffcc" opacity="0.68"/><rect x="660.1" y="500.5" width="1.1" height="13.8" fill="#c4ffcc" opacity="0.68"/><rect x="640.0" y="499.8" width="1.0" height="5.7" fill="#c4ffcc" opacity="0.48"/><rect x="652.2" y="499.2" width="0.5" height="9.0" fill="#c4ffcc" opacity="0.67"/><rect x="614.6" y="503.0" width="1.0" height="9.2" fill="#c4ffcc" opacity="0.69"/><rect x="622.6" y="498.8" width="0.8" height="12.8" fill="#c4ffcc" opacity="0.37"/><rect x="616.7" y="503.6" width="0.7" height="12.0" fill="#c4ffcc" opacity="0.66"/><rect x="666.8" y="497.6" width="0.6" height="7.0" fill="#c4ffcc" opacity="0.34"/><rect x="627.5" y="494.7" width="0.7" height="8.3" fill="#c4ffcc" opacity="0.53"/><rect x="660.2" y="500.0" width="0.8" height="10.8" fill="#c4ffcc" opacity="0.51"/><rect x="629.6" y="496.7" width="0.7" height="5.9" fill="#c4ffcc" opacity="0.69"/><rect x="614.6" y="503.9" width="0.7" height="17.1" fill="#c4ffcc" opacity="0.41"/><rect x="621.9" y="499.6" width="1.1" height="18.4" fill="#c4ffcc" opacity="0.65"/><rect x="608.3" y="507.2" width="0.8" height="17.5" fill="#c4ffcc" opacity="0.53"/><rect x="607.0" y="508.5" width="1.1" height="16.6" fill="#c4ffcc" opacity="0.69"/><rect x="621.9" y="498.8" width="1.0" height="12.3" fill="#c4ffcc" opacity="0.68"/><rect x="650.3" y="499.2" width="0.8" height="15.7" fill="#c4ffcc" opacity="0.52"/><rect x="609.4" y="505.3" width="1.0" height="17.9" fill="#c4ffcc" opacity="0.42"/><rect x="614.7" y="503.8" width="0.6" height="14.8" fill="#c4ffcc" opacity="0.33"/><rect x="638.5" y="498.7" width="0.7" height="10.4" fill="#c4ffcc" opacity="0.54"/><path d="M633 521 L638 520 L643 521.500 L643 525.300 L638 524 L634 525Z" fill="#f0fff0" opacity="0.95"/><path d="M646 522 L654 521.500 L660 523 L660.300 527 L654 525.500 L647 526Z" fill="#e0ffe4" opacity="0.9"/><path d="M612 501.500 L624 496.500 L630 496 L630 499 L622 500 L613 504.500Z" fill="#b4ffc0" opacity="0.7"/><path d="M650 484.500 L655 484 L655 486.500 L650 487Z M661.500 484 L668 484 L668 488 L661.500 488Z" fill="#a4ffb0" opacity="0.7"/></g>
<rect x="514" y="422.5" width="154" height="1" fill="#7a6630" opacity="0.75"/>
<rect x="514" y="440.2" width="154" height="1" fill="#7a6630" opacity="0.75"/>
<rect x="514" y="457.9" width="154" height="1" fill="#7a6630" opacity="0.75"/>
<rect x="514" y="475.6" width="154" height="1" fill="#7a6630" opacity="0.75"/>
<rect x="514" y="493.3" width="154" height="1" fill="#7a6630" opacity="0.75"/>
<rect x="514" y="511.0" width="154" height="1" fill="#7a6630" opacity="0.75"/>
<rect x="514" y="528.8" width="154" height="1" fill="#7a6630" opacity="0.75"/>
<rect x="514" y="546.5" width="154" height="1" fill="#7a6630" opacity="0.75"/>
<rect x="514" y="564.2" width="154" height="1" fill="#7a6630" opacity="0.75"/>
<rect x="514" y="564.2" width="154" height="1" fill="#8a7c50"/>
<rect x="514.0" y="565" width="0.8" height="3" fill="#a89868"/>
<rect x="519.7" y="565" width="0.8" height="1.6" fill="#a89868"/>
<rect x="525.4" y="565" width="0.8" height="1.6" fill="#a89868"/>
<rect x="531.1" y="565" width="0.8" height="1.6" fill="#a89868"/>
<rect x="536.8" y="565" width="0.8" height="3" fill="#a89868"/>
<rect x="542.5" y="565" width="0.8" height="1.6" fill="#a89868"/>
<rect x="548.2" y="565" width="0.8" height="1.6" fill="#a89868"/>
<rect x="553.9" y="565" width="0.8" height="1.6" fill="#a89868"/>
<rect x="559.6" y="565" width="0.8" height="3" fill="#a89868"/>
<rect x="565.3" y="565" width="0.8" height="1.6" fill="#a89868"/>
<rect x="571.0" y="565" width="0.8" height="1.6" fill="#a89868"/>
<rect x="576.7" y="565" width="0.8" height="1.6" fill="#a89868"/>
<rect x="582.4" y="565" width="0.8" height="3" fill="#a89868"/>
<rect x="588.1" y="565" width="0.8" height="1.6" fill="#a89868"/>
<rect x="593.8" y="565" width="0.8" height="1.6" fill="#a89868"/>
<rect x="599.5" y="565" width="0.8" height="1.6" fill="#a89868"/>
<rect x="605.2" y="565" width="0.8" height="3" fill="#a89868"/>
<rect x="610.9" y="565" width="0.8" height="1.6" fill="#a89868"/>
<rect x="616.6" y="565" width="0.8" height="1.6" fill="#a89868"/>
<rect x="622.3" y="565" width="0.8" height="1.6" fill="#a89868"/>
<rect x="628.0" y="565" width="0.8" height="3" fill="#a89868"/>
<rect x="633.7" y="565" width="0.8" height="1.6" fill="#a89868"/>
<rect x="639.4" y="565" width="0.8" height="1.6" fill="#a89868"/>
<rect x="645.1" y="565" width="0.8" height="1.6" fill="#a89868"/>
<rect x="650.8" y="565" width="0.8" height="3" fill="#a89868"/>
<rect x="656.5" y="565" width="0.8" height="1.6" fill="#a89868"/>
<rect x="662.2" y="565" width="0.8" height="1.6" fill="#a89868"/>
<rect x="667.9" y="565" width="0.8" height="1.6" fill="#a89868"/>
<rect x="605" y="563.5" width="1.2" height="2" fill="#000"/>
</svg>
<!--/SCOPE-->
<!--DIALOG-->
<div style="left:292px;top:237px;width:225.5px;height:110px;background:#242428;border:1px solid #0f0f11;box-shadow:0 1px 4px rgba(0,0,0,0.5)"></div>
<div style="left:293px;top:238px;width:223.5px;height:16px;background:#29292e;border-bottom:1px solid #0f0f11"></div>
<div style="left:311.500px;top:283.700px;width:188px;height:1.500px;background:#141416;border-radius:1px"></div>
<div style="left:311.500px;top:283.700px;width:22px;height:1.500px;background:#5cb038;border-radius:1px"></div>
<div style="left:443.500px;top:323.300px;width:62.500px;height:13.600px;border:1.100px solid #bb4437;border-radius:7px"></div>
<!--/DIALOG-->
<!--ICONS-->
<svg style="left:0;top:0" width="668" height="627" viewBox="0 0 668 627">
<!-- toolbar separators -->
<g fill="#131315"><rect x="63" y="55" width="1" height="20"/><rect x="139" y="55" width="1" height="20"/><rect x="300" y="55" width="1" height="20"/><rect x="331" y="55" width="1" height="20"/><rect x="358" y="55" width="1" height="20"/><rect x="384" y="55" width="1" height="20"/><rect x="410" y="55" width="1" height="20"/><rect x="458" y="55" width="1" height="20"/><rect x="527" y="55" width="1" height="20"/><rect x="613" y="55" width="1" height="20"/><rect x="641" y="55" width="1" height="20"/>
<rect x="435.500" y="401" width="1" height="17"/><rect x="461" y="401" width="1" height="17"/></g>
<rect x="426.400" y="36.500" width="1" height="9" fill="#3c3c40"/>
<!-- dropdown corner marks -->
<g fill="#8a8a8e"><path d="M61.500 70.500 v2.500 h-2.500z"/><path d="M249.500 69 v2.500 h-2.500z"/><path d="M329 70.500 v2.500 h-2.500z"/><path d="M356 70.500 v2.500 h-2.500z"/><path d="M637.500 70.500 v2.500 h-2.500z"/><path d="M58.500 396 v2.500 h-2.500z"/><path d="M57.500 311 v2.500 h-2.500z"/><path d="M439.500 434 v2.500 h-2.500z"/></g>
<circle cx="278.800" cy="64" r="1.100" fill="none" stroke="#3a3a3e" stroke-width="0.700"/>
<!-- top bar icons -->
<g fill="none" stroke="#68686c" stroke-width="0.900">
<rect x="39" y="37" width="10" height="7" rx="0.800"/><path d="M37.200 39 v6.500 h9.500"/><path d="M41 42.500 l2 -2.200 l1.600 1.700 l1.200 -1 l1.600 1.500"/><path d="M49.800 35 l0.900 0.900 M51.500 36.800 v1.200 M48 35.200 h1"/>
<rect x="65" y="36" width="10" height="7.500" rx="0.500"/><path d="M66.500 42 l2 -2.500 l1.800 2"/><circle cx="68" cy="38.200" r="0.800" fill="#68686c"/>
</g>
<g fill="#68686c"><rect x="71.500" y="40.500" width="1.600" height="1.400"/><rect x="74" y="40.500" width="1.600" height="1.400"/><rect x="76.500" y="40.500" width="1.600" height="1.400"/><rect x="71.500" y="42.700" width="1.600" height="1.400"/><rect x="74" y="42.700" width="1.600" height="1.400"/><rect x="76.500" y="42.700" width="1.600" height="1.400"/><rect x="71.500" y="44.900" width="1.600" height="1.400"/><rect x="74" y="44.900" width="1.600" height="1.400"/><rect x="76.500" y="44.900" width="1.600" height="1.400"/></g>
<g fill="none" stroke="#d0d0d0" stroke-width="1"><rect x="96.400" y="36.200" width="10.600" height="8.300" rx="0.800"/><path d="M92.900 36.200 h1.100 q0.600 0 0.600 0.600 v7.100 q0 0.600 -0.600 0.600 h-1.100 M110.400 36.200 h-1.100 q-0.600 0 -0.600 0.600 v7.100 q0 0.600 0.600 0.600 h1.100"/></g>
<path d="M100.800 43.300 l2.700 -4.800 l2.300 3 v1.800z" fill="#b4b4b4"/><rect x="97.900" y="38.200" width="1.800" height="1.700" fill="#e8e8e8"/><rect x="98" y="41.200" width="1.700" height="2.100" fill="#a0a0a0"/>
<!-- toolbar left icons -->
<rect x="69.500" y="60.500" width="6" height="7.500" fill="#3c3c40" stroke="#58585c" stroke-width="0.800"/><rect x="77.500" y="60.500" width="6" height="7.500" fill="#8c8c90"/><path d="M76.500 59.500 v10" stroke="#68686c" stroke-width="0.800" stroke-dasharray="1.200 0.800"/>
<g fill="#3a3a3e" stroke="#5c5c60" stroke-width="0.800"><rect x="94.500" y="60.500" width="14.500" height="8"/><path d="M94.500 64.500 h14.500 M99.300 60.500 v8 M104.200 60.500 v8"/></g>
<rect x="119.500" y="60.300" width="13.500" height="8.200" fill="#48484c"/><path d="M126.200 61.300 a3.100 3.100 0 0 1 0 6.200z" fill="#b8b8bc"/><path d="M126.200 61.300 a3.100 3.100 0 0 0 0 6.200z" fill="#2a2a2e"/>
<!-- fullscreen -->
<g fill="none" stroke="#5a5a5e" stroke-width="0.900"><rect x="308.500" y="60.500" width="13.500" height="8" rx="0.800"/><path d="M310.500 64 v-1.700 h2.200 M320 64 v-1.700 h-2.200 M310.500 65 v1.700 h2.200 M320 65 v1.700 h-2.200"/></g>
<!-- HQ -->
<g fill="none" stroke="#d0d0d0" stroke-width="1"><rect x="337.500" y="59.500" width="13" height="8" rx="1.300"/><path d="M337.500 62 h13" stroke-width="0.800"/><path d="M339 60.800 h1 M341.500 60.800 h1 M344 60.800 h1 M346.500 60.800 h1 M339 66.200 h1 M341.500 66.200 h1" stroke-width="0.900"/></g>
<rect x="342.500" y="63.500" width="10" height="6.500" rx="1.200" fill="#e8e8e8" stroke="#242428" stroke-width="0.800"/>
<text x="347.500" y="68.600" font-size="5" font-weight="bold" fill="#1a1a1c" text-anchor="middle">HQ</text>
<!-- speaker -->
<path d="M364.600 62.600 h2.600 l3.600 -2.800 v9.800 l-3.600 -2.800 h-2.600z" fill="#e4e4e4"/><path d="M372.500 62.400 q1.400 2.300 0 4.600 M374.300 60.800 q2.400 3.900 0 7.800" stroke="#e4e4e4" stroke-width="1" fill="none"/>
<!-- dots -->
<g fill="#8c8c90"><circle cx="392.800" cy="64.800" r="0.900"/><circle cx="397.400" cy="64.800" r="0.900"/><circle cx="402" cy="64.800" r="0.900"/><circle cx="469.500" cy="409.500" r="0.900"/><circle cx="474" cy="409.500" r="0.900"/><circle cx="478.500" cy="409.500" r="0.900"/></g>
<!-- arrow cursor -->
<path d="M420.900 59.600 L420.900 68.600 L422.800 66.900 L424.600 70.400 L426.200 69.700 L424.600 66.300 L427.300 66Z" fill="#f4f4f4"/>
<!-- hand -->
<g stroke="#8c8c90" stroke-width="1.300" stroke-linecap="round" fill="none"><path d="M442.500 61.600 L443.600 66 M444.800 60.300 L445.300 65.500 M447.100 60.500 L447 65.500 M449.300 62 L448.600 66 M440.500 64.800 L443 67.500"/></g>
<path d="M442.200 65 h7 l-0.400 3.200 q-0.500 1.800 -2 1.900 h-2.300 q-1.200 -0.200 -1.800 -1.600z" fill="#8c8c90"/>
<!-- node icon -->
<g fill="none" stroke="#8c8c90" stroke-width="0.900"><rect x="465" y="60.600" width="5.800" height="3" rx="0.400"/><rect x="472.200" y="66.500" width="5.800" height="3" rx="0.400"/><path d="M463.800 62.100 h1.200 M470.300 63.600 l2.400 2.900"/></g>
<!-- layers -->
<g fill="none" stroke-width="0.900"><path d="M493 59.600 l4.800 2.300 l-4.800 2.300 l-4.800 -2.300z" stroke="#9c9ca0"/><path d="M488.200 64.800 l4.800 2.300 l4.800 -2.300 M488.200 67.400 l4.800 2.300 l4.800 -2.300" stroke="#707074"/></g>
<!-- curves -->
<g fill="none" stroke-width="0.900"><path d="M509.200 62.200 h2 q2 0 3.100 2.900 t3.100 2.900 h2" stroke="#8c8c90"/><path d="M509.200 68 h2 q2 0 3.100 -2.900 t3.100 -2.900 h2" stroke="#707074"/></g>
<!-- image icon -->
<g fill="none" stroke="#7a7a7e" stroke-width="0.900"><rect x="620.500" y="60.300" width="12.500" height="9" rx="0.800"/></g><path d="M622 68 l2.500 -3 l1.600 1.700 l2 -2.600 l3 3.900z" fill="#7a7a7e"/><circle cx="624" cy="63" r="1" fill="#7a7a7e"/>
<!-- search list -->
<g fill="none" stroke="#7a7a7e" stroke-width="0.900"><path d="M660 63 v-2.500 h-11.300 v8.500 h6 M648.700 63 h11.300 M652 60.500 v8.500 M648.700 66 h6"/><circle cx="658.200" cy="66.800" r="2.100"/><path d="M659.800 68.400 l1.800 1.800"/></g>
<!--I2-->
<!-- transport -->
<rect x="40" y="286.500" width="252" height="1" fill="#4a4a4e"/><rect x="196.700" y="284" width="2" height="6" rx="0.800" fill="#f0f0f0"/>
<g transform="translate(45.700 304.700) rotate(-45)"><rect x="-6.500" y="-1" width="7" height="2" rx="1" fill="#f0f0f0"/><rect x="0" y="-2.600" width="2.200" height="5.200" rx="0.600" fill="#f0f0f0"/><rect x="2.200" y="-1.600" width="5" height="3.200" rx="1.500" fill="#f0f0f0"/></g>
<g fill="none" stroke="#505054" stroke-width="0.900"><path d="M71.500 299 l6.300 2.700 l-6.300 2.700 l-6.300 -2.700z M65.200 304.300 l6.300 2.700 l6.300 -2.700 M65.200 307 l6.300 2.700 l6.300 -2.700"/></g>
<g fill="#8a8a8e">
<path d="M145.200 300 h1.500 v8.800 h-1.500z M154 300.200 v8.400 l-7.200 -4.200z M161 300.200 v8.400 l-7.200 -4.200z"/>
<path d="M179.200 300.300 v8.200 l-8.200 -4.100z"/>
<rect x="191.800" y="300" width="9" height="8.800"/>
<path d="M213.400 300.300 v8.200 l8.300 -4.100z"/>
<path d="M231.200 300.200 v8.400 l7.200 -4.200z M238.200 300.200 v8.400 l7.200 -4.200z M245.400 300 h1.500 v8.800 h-1.500z"/>
</g>
<g fill="none" stroke="#8a8a8e" stroke-width="1.100"><path d="M262 302.200 h6 a3.200 3.200 0 0 1 0 6.500 h-7.500 a3.200 3.200 0 0 1 -0.500 -6.300"/><path d="M265 299.200 l3 3 l-3 3"/></g>
<!-- palette icons -->
<g fill="none" stroke="#7c7c80" stroke-width="0.900">
<path d="M44 387 l1.500 -2.500 h6 l1 2 M42.500 387.500 h8.500 v6 h-5 M51 389 l4.800 -2 v7 l-4.800 -2"/><circle cx="44.200" cy="392" r="3.400" stroke-dasharray="1.600 0.900"/>
<circle cx="79.600" cy="389.400" r="5.600"/><circle cx="79.600" cy="389.400" r="1.300" fill="#7c7c80"/>
<path d="M114.500 390.500 a5.600 5.600 0 1 0 -5.500 4.500"/><circle cx="109" cy="389.400" r="1.300" fill="#7c7c80"/>
</g>
<circle cx="86.300" cy="381.700" r="1.200" fill="#e23b30"/>
<text x="110" y="396.300" font-size="5.200" fill="#7c7c80">HDR</text>
<g fill="none" stroke="#58585c" stroke-width="0.600"><path d="M137.500 384.300 v11 h12 M140.500 384.300 v11 M143.500 384.300 v11 M146.500 384.300 v11 M149.500 384.300 v11 M137.500 386.300 h12 M137.500 389.300 h12 M137.500 392.300 h12"/></g>
<path d="M137.500 395 q4 0 6 -5.500 t6 -5.500" fill="none" stroke="#8c8c90" stroke-width="1"/>
<path d="M169 384.600 q-3.500 4.500 -3.500 6.800 a3.500 3.500 0 0 0 7 0 q0 -2.300 -3.500 -6.800z" fill="none" stroke="#7c7c80" stroke-width="0.900"/>
<g fill="#58585c"><rect x="174" y="385" width="1.300" height="1.300"/><rect x="176.200" y="385" width="1.300" height="1.300"/><rect x="178.400" y="385" width="1.300" height="1.300"/><rect x="174" y="387.200" width="1.300" height="1.300"/><rect x="176.200" y="387.200" width="1.300" height="1.300"/><rect x="178.400" y="387.200" width="1.300" height="1.300"/><rect x="174" y="389.400" width="1.300" height="1.300"/><rect x="176.200" y="389.400" width="1.300" height="1.300"/><rect x="178.400" y="389.400" width="1.300" height="1.300"/><rect x="174" y="391.600" width="1.300" height="1.300"/><rect x="176.200" y="391.600" width="1.300" height="1.300"/><rect x="178.400" y="391.600" width="1.300" height="1.300"/></g>
<g fill="none" stroke="#56565a" stroke-width="0.700"><path d="M198.300 383.500 h7 l3.500 5.900 l-3.500 5.900 h-7 l-3.500 -5.900z M194.800 389.400 h14 M198.300 383.500 l7 11.800 M205.300 383.500 l-7 11.800 M196.500 386.400 h10.500 M196.500 392.400 h10.500 M201.800 383.500 l-5.200 8.900 M201.800 383.500 l5.200 8.900 M201.800 395.300 l-5.200 -8.900 M201.800 395.300 l5.200 -8.900"/></g>
<g transform="translate(231 389.600) rotate(-45)" fill="#8c8c90"><rect x="-7" y="-0.900" width="7" height="1.800" rx="0.900"/><rect x="0" y="-2.400" width="2" height="4.800" rx="0.500"/><rect x="2" y="-1.500" width="4.800" height="3" rx="1.400"/></g>
<g fill="none" stroke="#7c7c80" stroke-width="0.900"><ellipse cx="260" cy="389.600" rx="6" ry="4.800"/><path d="M260 383.500 v2.400 M260 393.300 v2.400 M252.700 389.600 h2.600 M264.700 389.600 h2.600"/>
<circle cx="289.700" cy="389.700" r="2.800"/><circle cx="289.700" cy="389.700" r="0.900" fill="#7c7c80"/><path d="M283 387 v-2.700 h2.700 M296.400 387 v-2.700 h-2.700 M283 392.500 v2.700 h2.700 M296.400 392.500 v2.700 h-2.700" stroke="#56565a"/></g>
<!-- magic mask icon -->
<g fill="none" stroke="#cfcfcf" stroke-width="1"><rect x="313" y="385.500" width="12.500" height="10" rx="0.800"/><path d="M311 384 h11" stroke-dasharray="1 0.800" stroke-width="0.800"/><path d="M311 384 v10" stroke-dasharray="1 0.800" stroke-width="0.800"/></g>
<circle cx="319.300" cy="389.300" r="1.900" fill="#cfcfcf"/><path d="M315.500 395 q0 -3.600 3.800 -3.600 t3.800 3.600z" fill="#cfcfcf"/>
<circle cx="325.200" cy="381.700" r="1.200" fill="#e23b30"/>
<!-- blur -->
<path d="M344.500 384.600 q-2.800 3.600 -2.800 5.400 a2.800 2.800 0 0 0 5.600 0 q0 -1.800 -2.800 -5.400z" fill="#a0a0a4"/><path d="M350 387.500 l4 7.500 h-8z" fill="#88888c"/>
<!-- key -->
<rect x="371.500" y="385.500" width="12.500" height="9.500" fill="#808084"/><circle cx="377.700" cy="390" r="2.900" fill="#1c1c1e"/><path d="M369 383.500 h11 M369 383.500 v9" stroke="#6a6a6e" stroke-width="0.800" stroke-dasharray="1 0.800" fill="none"/>
<!-- sizing -->
<g fill="none" stroke="#56565a" stroke-width="0.900"><rect x="401" y="386" width="10.500" height="8" rx="0.800" fill="#3a3a3e"/><path d="M403 384 h8 l-1.500 -1.300 M409.500 396.300 h-8 l1.500 1.300 M413.500 388 v3 M399 388 v3"/></g>
<!-- scopes icon -->
<g fill="none" stroke="#d4d4d4" stroke-width="1"><path d="M495.200 384.600 v9.700 h13.700"/></g><path d="M496.800 393 v-5 l1.300 -2.500 l1.400 5 l1.200 -2.500 l1.300 3 l1.300 -4 l1.400 4 l1.300 -2 l1.300 2 v2z" fill="#d4d4d4"/>
<!-- keyframes icon -->
<path d="M535.500 385 l4.800 4.700 l-4.800 4.700 l-4.800 -4.700z" fill="#68686c"/><path d="M531.500 385.500 l-4.300 4.200 l4.300 4.200 M529 385.500 l-4.300 4.200 l4.300 4.200" fill="none" stroke="#58585c" stroke-width="0.800"/>
<!-- panel title icons -->
<g fill="none" stroke="#8c8c90" stroke-width="0.900"><path d="M443.500 406.500 a4.300 4.300 0 1 1 -0.800 4.500"/><path d="M441.800 405 l1.500 1.900 l2.200 -1"/><path d="M447.300 407.300 v4 M445.300 409.300 h4"/></g>
<!--/I2-->
<!--I3-->
<!-- keyframe toolbar -->
<g fill="#8c8c90">
<path d="M189 422.500 h1.600 v3.500 h2 l-2.800 3 l-2.800 -3 h2z"/><rect x="185.300" y="430" width="1.300" height="1.100"/><rect x="187.400" y="430" width="1.300" height="1.100"/><rect x="189.500" y="430" width="1.300" height="1.100"/><rect x="191.600" y="430" width="1.300" height="1.100"/><rect x="193.500" y="430" width="1" height="1.100"/>
<rect x="203.200" y="422" width="1.500" height="10"/><rect x="206.300" y="426.300" width="1.400" height="1.400"/><rect x="209.200" y="426.300" width="1.400" height="1.400"/>
<path d="M219 422.700 h1.700 v8.400 h-1.700z M227.900 422.700 v8.400 l-7 -4.200z"/>
<path d="M244.700 422.700 v8.400 l-8.400 -4.200z"/>
<rect x="253" y="422.500" width="3.300" height="8.800"/><rect x="258.900" y="422.500" width="3.300" height="8.800"/>
<path d="M269 424.200 h6.500 v-1.800 l3.200 2.600 l-3.200 2.600 v-1.800 h-6.500z M278.700 429.600 h-6.500 v1.800 l-3.200 -2.600 l3.200 -2.600 v1.800 h6.500z"/>
<path d="M286.600 422.700 v8.400 l8.400 -4.200z"/>
<path d="M303.400 422.700 v8.400 l7 -4.200z M310.500 422.700 h1.700 v8.400 h-1.700z"/>
<rect x="320.800" y="426.300" width="1.400" height="1.400"/><rect x="323.700" y="426.300" width="1.400" height="1.400"/><rect x="326.500" y="422" width="1.500" height="10"/>
</g>
<!-- qualifier tools -->
<g transform="translate(349 427) rotate(-50)" fill="#f2f2f2"><rect x="-6.500" y="-0.900" width="6.500" height="1.800" rx="0.900"/><rect x="0" y="-2.300" width="1.900" height="4.600" rx="0.500"/><rect x="1.900" y="-1.500" width="4.500" height="3" rx="1.400"/></g>
<path d="M351.800 428.300 v4.200 M349.700 430.400 h4.200" stroke="#f2f2f2" stroke-width="1.100"/>
<g transform="translate(369 426.600) rotate(-50)" fill="#8c8c90"><rect x="-6" y="-0.700" width="6" height="1.400" rx="0.700"/><rect x="0" y="-2" width="1.600" height="4" rx="0.500"/><rect x="1.600" y="-1.300" width="4" height="2.600" rx="1.200"/></g>
<path d="M369.500 431.300 h4" stroke="#8c8c90" stroke-width="1"/>
<g fill="none" stroke="#8c8c90" stroke-width="1.200"><path d="M391.500 422.500 l-4 6.500"/><path d="M411.500 422.500 l-4 6.500"/></g>
<path d="M387.800 428.300 l1.300 0.900 q-1.500 2.800 -4.400 2.600 q2.300 -1 3.100 -3.500z" fill="#8c8c90"/><path d="M392.300 427.700 v4.200 M390.200 429.800 h4.200" stroke="#8c8c90" stroke-width="1"/>
<path d="M407.800 428.300 l1.300 0.900 q-1.500 2.800 -4.400 2.600 q2.300 -1 3.100 -3.500z" fill="#8c8c90"/><path d="M410.200 431 h4.200" stroke="#8c8c90" stroke-width="1"/>
<path d="M431.500 422.500 l-4 6.500" stroke="#4e4e52" stroke-width="1.200" fill="none"/><path d="M427.800 428.300 l1.300 0.900 q-1.500 2.800 -4.400 2.600 q2.300 -1 3.100 -3.500z" fill="#4e4e52"/><path d="M434.800 428.500 q-2.200 -0.800 -2.500 0.500 t1.300 1.500 t-1.500 1.700" stroke="#4e4e52" stroke-width="0.800" fill="none"/>
<rect x="442" y="420.500" width="1" height="14.500" fill="#1c1c1f"/>
<rect x="447" y="421.600" width="10.600" height="10.600" rx="0.800" fill="#3e3e42" stroke="#6e6e72" stroke-width="0.900"/><circle cx="452.300" cy="426.900" r="2.900" fill="#9c9ca0"/>
<rect x="467.500" y="425" width="8" height="8" rx="0.800" fill="#28282c" stroke="#e4e4e4" stroke-width="1"/>
<rect x="464.300" y="421.500" width="7.200" height="7.200" rx="0.800" fill="#a8a8a8" stroke="#e8e8e8" stroke-width="0.900"/>
<path d="M465.500 423 h1.200 v1.200 h-1.200z M467.900 423 h1.200 v1.200 h-1.200z M466.700 424.200 h1.200 v1.200 h-1.200z M469.100 424.200 h1.200 v1.200 h-1.200z M465.500 425.400 h1.200 v1.200 h-1.200z M467.900 425.400 h1.200 v1.200 h-1.200z M466.700 426.600 h1.200 v1.200 h-1.200z M469.100 426.600 h1.200 v1.200 h-1.200z" fill="#333"/>
<!-- trash icons in tracks -->
<g id="tr" fill="#8c8c90"><path d="M103 478.500 h5.400 v0.900 h-5.400z M104.800 477.500 h1.800 v1 h-1.800z M103.500 480 h4.400 l-0.400 4.800 h-3.600z"/></g>
<use href="#tr" y="16.300"/><use href="#tr" y="32.600"/>
<g stroke="#28282c" stroke-width="0.500"><path d="M105 480.500 v3.800 M106.400 480.500 v3.800 M105 496.800 v3.800 M106.400 496.800 v3.800 M105 513.100 v3.800 M106.400 513.100 v3.800"/></g>
<!-- options: reset, chevrons, side marks -->
<g fill="none" stroke="#8c8c90" stroke-width="0.900"><path d="M466.200 448.500 a3.600 3.600 0 1 1 -1 2.600"/><path d="M464.700 447 l1.500 1.700 l2 -0.800"/></g>
<g fill="none" stroke="#cfcfcf" stroke-width="1"><path d="M396.200 507.700 l3.200 3.200 l3.200 -3.200 M460.200 507.700 l3.200 3.200 l3.200 -3.200"/></g>
<g fill="#58585c"><rect x="337" y="464.300" width="2" height="0.900"/><rect x="337" y="480.600" width="2" height="0.900"/><rect x="337" y="497" width="2" height="0.900"/><rect x="337" y="513.300" width="2" height="0.900"/></g>
<g fill="#161618"><rect x="336" y="456" width="4.500" height="1"/><rect x="336" y="472.300" width="4.500" height="1"/><rect x="336" y="488.600" width="4.500" height="1"/><rect x="336" y="505" width="4.500" height="1"/><rect x="336" y="521.300" width="4.500" height="1"/></g>
<!-- bottom bar -->
<g fill="#9c9ca0">
<path d="M43.500 588.500 l5.500 -4 v2.600 q7 0.300 7.800 7.400 q-2.300 -3.700 -7.800 -3.400 v2.400z"/>
<path d="M84 588.500 l-5.500 -4 v2.600 q-7 0.300 -7.800 7.400 q2.300 -3.700 7.800 -3.400 v2.400z"/>
<path d="M101 585.500 h10 v1.300 h-10z M104.300 584 h3.400 v1.500 h-3.400z M101.800 587.600 h8.400 l-0.700 7.800 h-7z"/>
</g>
<path d="M104.300 588.600 v5.600 M106 588.600 v5.600 M107.700 588.600 v5.600" stroke="#1a1a1c" stroke-width="0.600"/>
<!-- cut page icon -->
<g fill="none" stroke="#5e5e62" stroke-width="0.900"><path d="M345 586.500 l9.500 -0.800 l1.500 1 l-1.200 7.800 l-1.500 0.800 l-9.500 -0.500 l1.200 -8.300z M349.800 585.200 l-1.300 10.800 M351.400 586 l-1 9"/><path d="M340.500 588.800 h3.500 M341.300 591.300 h2.500 M342 593.800 h2"/></g>
<!-- color wheel -->
<g><circle cx="410" cy="584.400" r="1.250" fill="#e8c8d8"/><circle cx="413.900" cy="586" r="1.250" fill="#d040c0"/><circle cx="415.500" cy="589.900" r="1.250" fill="#4a6ae0"/><circle cx="413.900" cy="593.800" r="1.250" fill="#30b050"/><circle cx="410" cy="595.400" r="1.250" fill="#b8c830"/><circle cx="406.100" cy="593.800" r="1.250" fill="#e8a020"/><circle cx="404.500" cy="589.900" r="1.250" fill="#e86030"/><circle cx="406.100" cy="586" r="1.250" fill="#e03060"/><circle cx="410" cy="589.900" r="0.900" fill="#888"/></g>
<!-- rocket -->
<g fill="none" stroke="#7c7c80" stroke-width="0.900"><path d="M480.800 584.500 q-5.500 0.300 -8.800 5.800 l2.800 2.800 q5.500 -3.300 6 -8.600z"/><circle cx="477" cy="588.300" r="1.100"/><path d="M472.500 589.500 l-3.300 0.500 l-1.700 2.200 l3.300 0.200 M475.800 593 l-0.500 3.300 l-2.200 1.700 l-0.200 -3.300 M470.800 593.500 q-2.300 0.500 -2.500 3.500 q2.800 -0.300 3.400 -2.600"/></g>
<!--/I3-->
</svg>
<!--/ICONS-->
<!--TEXT-->
<div class="t" id="t0" style="font-size:8.52px;color:#f2f2f2;top:35.5px;text-shadow:0.35px 0 0 #f2f2f2;left:394px;"><span>Projeto</span></div>
<div class="t" id="t1" style="font-size:7.55px;color:#76767a;top:35.5px;left:432.4px;"><span>Editado</span></div>
<div class="t" id="t2" style="font-size:8.09px;color:#eeeeee;top:59.9px;text-shadow:0.35px 0 0 #eeeeee;left:34.5px;"><span>68%</span></div>
<div class="t" id="t3" style="font-size:7.79px;color:#e6e6e6;top:59.9px;text-shadow:0.35px 0 0 #e6e6e6;left:188.4px;"><span>Pxysis - Sean V</span></div>
<div class="t" id="t4" style="font-size:7.55px;color:#f2f2f2;top:240.3px;text-shadow:0.35px 0 0 #f2f2f2;left:299.3px;"><span>AI Magic Mask</span></div>
<div class="t" id="t5" style="font-size:7.49px;color:#eeeeee;top:266.3px;left:310px;"><span>Rastreando...</span></div>
<div class="t" id="t6" style="font-size:7.03px;color:#747478;top:294.1px;left:314.5px;"><span>Velocidade do Rastreamento: 1 fps   00:01:15 Restante(s)</span></div>
<div class="t" id="t7" style="font-size:6.95px;color:#b8b8b8;top:324.6px;left:374.70px;width:200px;text-align:center;"><span>Parar</span></div>
<div class="t" id="t8" style="font-size:7.71px;color:#f2f2f2;top:403.8px;text-shadow:0.35px 0 0 #f2f2f2;left:32.7px;"><span>AI Magic Mask 2</span></div>
<div class="t" id="t9" style="font-size:7.38px;color:#f2f2f2;top:403.8px;text-shadow:0.35px 0 0 #f2f2f2;left:493px;"><span>Escopos</span></div>
<div class="t" id="t10" style="font-size:6.25px;color:#66666a;top:440.3px;left:124.2px;"><span>00:00:00:23</span></div>
<div class="t" id="t11" style="font-size:6.25px;color:#66666a;top:440.3px;left:179.4px;"><span>00:00:02:03</span></div>
<div class="t" id="t12" style="font-size:6.25px;color:#66666a;top:440.3px;left:234.5px;"><span>00:00:03:07</span></div>
<div class="t" id="t13" style="font-size:6.25px;color:#66666a;top:440.3px;left:289.5px;"><span>00:00:04:11</span></div>
<div class="t" id="t14" style="font-size:6.20px;color:#8e8e92;top:459.3px;left:50px;"><span>Overall Track</span></div>
<div class="t" id="t15" style="font-size:6.20px;color:#8e8e92;top:475.5px;left:49.5px;"><span>Click 1</span></div>
<div class="t" id="t16" style="font-size:6.20px;color:#8e8e92;top:491.8px;left:49.5px;"><span>Click 2</span></div>
<div class="t" id="t17" style="font-size:6.20px;color:#8e8e92;top:508.0px;left:49.5px;"><span>Click 3</span></div>
<div class="t" id="t18" style="font-size:6.45px;color:#8a8a8e;top:445.8px;left:351px;"><span>Qualidade</span></div>
<div class="t" id="t19" style="font-size:6.99px;color:#f4f4f4;top:459.8px;text-shadow:0.35px 0 0 #f4f4f4;left:281.50px;width:200px;text-align:center;"><span>Acelerado</span></div>
<div class="t" id="t20" style="font-size:7.14px;color:#8e8e92;top:459.8px;left:343.00px;width:200px;text-align:center;"><span>Superior</span></div>
<div class="t" id="t21" style="font-size:6.45px;color:#4c4c50;top:473.8px;left:351px;"><span>Refinamento Inteligente</span></div>
<div class="t" id="t22" style="font-size:6.45px;color:#4c4c50;top:473.8px;right:196.70px;"><span>30</span></div>
<div class="t" id="t23" style="font-size:6.45px;color:#8a8a8e;top:491.6px;left:351px;"><span>Modo</span></div>
<div class="t" id="t24" style="font-size:6.45px;color:#8a8a8e;top:491.6px;left:415.5px;"><span>Formal</span></div>
<div class="t" id="t25" style="font-size:6.45px;color:#8e8e92;top:504.1px;left:357px;"><span>Diminuir</span></div>
<div class="t" id="t26" style="font-size:6.45px;color:#8e8e92;top:504.1px;left:421.7px;"><span>Círculo</span></div>
<div class="t" id="t27" style="font-size:6.45px;color:#8a8a8e;top:515.5px;left:351px;"><span>Raio</span></div>
<div class="t" id="t28" style="font-size:6.45px;color:#e0e0e0;top:515.5px;right:261.00px;"><span>0</span></div>
<div class="t" id="t29" style="font-size:6.45px;color:#8a8a8e;top:515.5px;left:415.5px;"><span>Iterações</span></div>
<div class="t" id="t30" style="font-size:6.45px;color:#e0e0e0;top:515.5px;right:197.20px;"><span>1</span></div>
<div class="t" id="t31" style="font-size:6.45px;color:#8a8a8e;top:531.3px;left:351px;"><span>Suavização</span></div>
<div class="t" id="t32" style="font-size:6.45px;color:#e0e0e0;top:531.3px;right:261.00px;"><span>0</span></div>
<div class="t" id="t33" style="font-size:6.45px;color:#8a8a8e;top:531.3px;left:415.5px;"><span>Eliminar Ruído</span></div>
<div class="t" id="t34" style="font-size:6.45px;color:#e0e0e0;top:531.3px;right:196.70px;"><span>0.0</span></div>
<div class="t" id="t35" style="font-size:6.45px;color:#8a8a8e;top:546.7px;left:351px;"><span>Raio de Desfoque</span></div>
<div class="t" id="t36" style="font-size:6.45px;color:#e0e0e0;top:546.7px;right:255.00px;"><span>0.0</span></div>
<div class="t" id="t37" style="font-size:6.45px;color:#8a8a8e;top:546.7px;left:421.5px;"><span>Taxa de E/S</span></div>
<div class="t" id="t38" style="font-size:6.45px;color:#e0e0e0;top:546.7px;right:196.70px;"><span>0.0</span></div>
<div class="t" id="t39" style="font-size:6.45px;color:#8a8a8e;top:562.7px;left:351px;"><span>Limpar Preto</span></div>
<div class="t" id="t40" style="font-size:6.45px;color:#e0e0e0;top:562.7px;right:261.00px;"><span>0.0</span></div>
<div class="t" id="t41" style="font-size:6.45px;color:#8a8a8e;top:562.7px;left:415.5px;"><span>Cortar Preto</span></div>
<div class="t" id="t42" style="font-size:6.45px;color:#e0e0e0;top:562.7px;right:196.70px;"><span>0.0</span></div>
<div class="t" id="t43" style="font-size:6.74px;color:#c9a84e;top:417.8px;right:158.00px;"><span>1023</span></div>
<div class="t" id="t44" style="font-size:6.83px;color:#c9a84e;top:435.5px;right:158.00px;"><span>896</span></div>
<div class="t" id="t45" style="font-size:6.83px;color:#c9a84e;top:453.2px;right:158.00px;"><span>768</span></div>
<div class="t" id="t46" style="font-size:6.83px;color:#c9a84e;top:470.9px;right:158.00px;"><span>640</span></div>
<div class="t" id="t47" style="font-size:6.83px;color:#c9a84e;top:488.6px;right:158.00px;"><span>512</span></div>
<div class="t" id="t48" style="font-size:6.83px;color:#c9a84e;top:506.3px;right:158.00px;"><span>384</span></div>
<div class="t" id="t49" style="font-size:6.83px;color:#c9a84e;top:524.3px;right:158.00px;"><span>256</span></div>
<div class="t" id="t50" style="font-size:6.83px;color:#c9a84e;top:542.0px;right:158.00px;"><span>128</span></div>
<div class="t" id="t51" style="font-size:6.09px;color:#c9a84e;top:559.5px;right:158.00px;"><span>0</span></div>
<!--/TEXT-->
</div></div>
</body></html>
